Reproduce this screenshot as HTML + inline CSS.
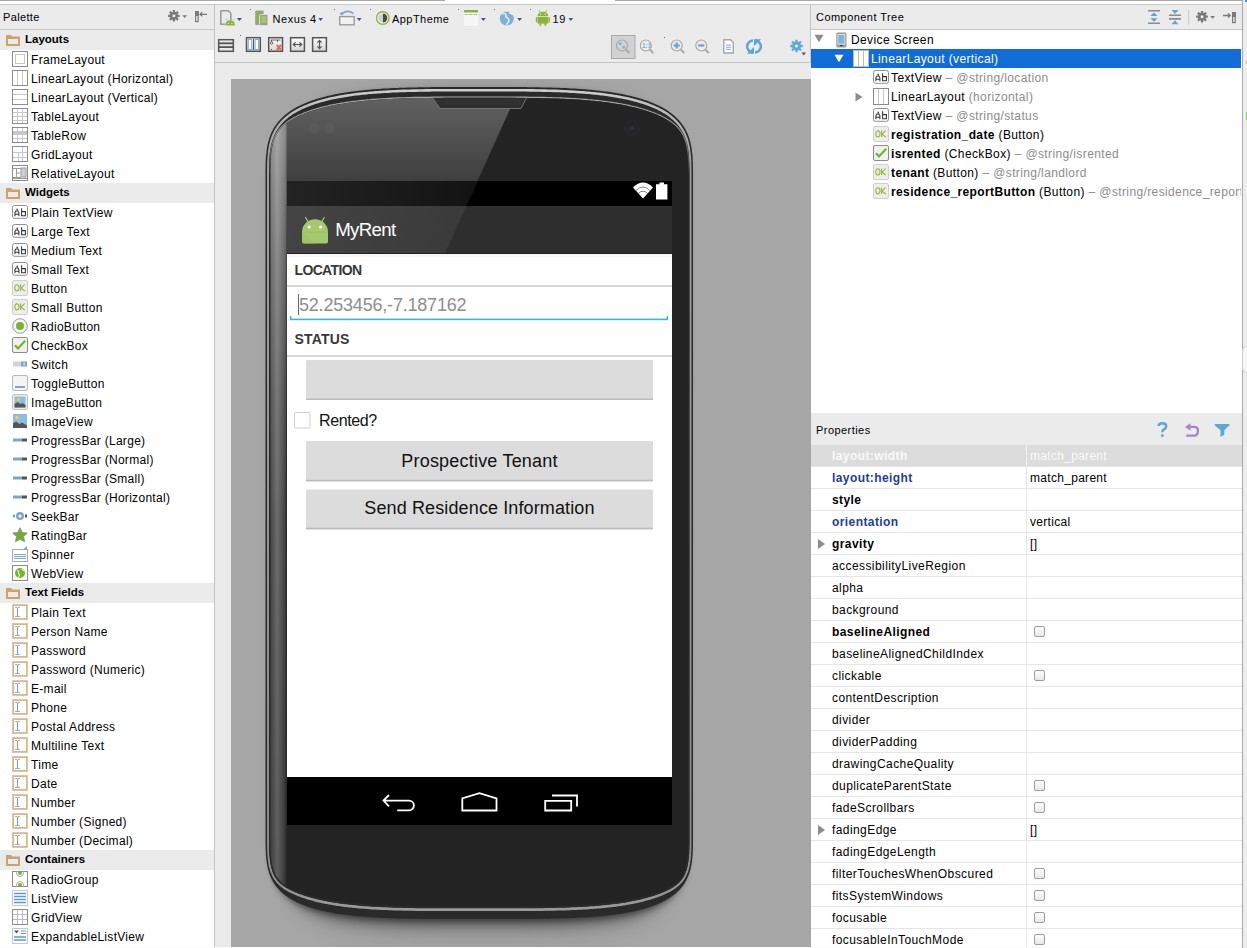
<!DOCTYPE html>
<html><head><meta charset="utf-8"><style>
*{margin:0;padding:0;box-sizing:border-box}
html,body{width:1247px;height:948px;overflow:hidden;background:#ebebeb;font-family:"Liberation Sans",sans-serif;font-size:12px;color:#000}
.abs{position:absolute}
#topline{position:absolute;left:0;top:0;width:1242px;height:1px;background:#a9a9a9}
#topgap{position:absolute;left:445px;top:0;width:170px;height:1px;background:#fff}
#topwhite{position:absolute;left:0;top:1px;width:1242px;height:3px;background:#fff}
#topline2{position:absolute;left:0;top:4px;width:1242px;height:1px;background:#c8c8c8}
/* palette */
#pal{position:absolute;left:0;top:5px;width:214px;height:943px;background:#ebebeb}
#palhead{position:absolute;left:0;top:5px;width:214px;height:25px;border-bottom:1px solid #c8c8c8}
#palhead span{position:absolute;left:3px;top:6px;font-size:11px;letter-spacing:0.35px}
#pallist{position:absolute;left:0;top:30px;width:214px;height:918px;background:#fff}
.pg{position:absolute;left:0;width:214px;height:20px;background:#ebebeb}
.pg span{position:absolute;left:25px;top:3px;font-weight:bold;font-size:11.5px;letter-spacing:0px}
.pg .fold{position:absolute;left:6px;top:4px}
.pi{position:absolute;left:0;width:214px;height:19px}
.pi .ic{position:absolute;left:12px;top:1px}
.pi span{position:absolute;left:31px;top:3px;font-size:12px;letter-spacing:0.3px}
#div1{position:absolute;left:214px;top:5px;width:1px;height:943px;background:#c4c4c4}
/* toolbar */
#tb{position:absolute;left:215px;top:5px;width:595px;height:58px;border-bottom:1px solid #c6c6c6}
#canvas{position:absolute;left:231px;top:79px;width:580px;height:868px;background:#a6a6a6;overflow:hidden}
#div2{position:absolute;left:810px;top:5px;width:1px;height:58px;background:#c4c4c4}
/* right */
#ct{position:absolute;left:811px;top:5px;width:431px;height:408px;background:#fff}
#cthead{position:absolute;left:811px;top:5px;width:431px;height:25px;background:#ebebeb;border-bottom:1px solid #c8c8c8}
#cthead span{position:absolute;left:5px;top:6px;font-size:11px;letter-spacing:0.45px}
.tr{position:absolute;left:811px;width:430px;height:19px;white-space:nowrap;overflow:hidden}
.tr span{position:absolute;top:3px;letter-spacing:0.38px}
.tr .g{color:#8c8c8c}
#prophead{position:absolute;left:811px;top:413px;width:431px;height:32px;background:#ebebeb}
#prophead span{position:absolute;left:5px;top:11px;font-size:11px;letter-spacing:0.45px}
#props{position:absolute;left:811px;top:445px;width:431px;height:503px;background:#fff}
.pr{position:absolute;left:811px;width:431px;height:22px;border-bottom:1px solid #e6e6e6}
.pr .k{position:absolute;left:21px;top:4px;letter-spacing:0.42px}
.pr .v{position:absolute;left:219px;top:4px;letter-spacing:0.3px}
.pr .sep{position:absolute;left:215px;top:0;width:1px;height:22px;background:#e6e6e6}
.pr .cb{position:absolute;left:223px;top:5px;width:11px;height:11px;border:1px solid #9d9d9d;border-radius:2px;background:linear-gradient(#fdfdfd,#e8e8e8)}
.pr .exp{position:absolute;left:7px;top:6px;width:0;height:0;border-left:7px solid #8c8c8c;border-top:5px solid transparent;border-bottom:5px solid transparent}
.b{font-weight:bold}
.blue{color:#1d3d9e}
#rborder{position:absolute;left:1242px;top:0;width:1px;height:948px;background:#a8a8a8}
#rside{position:absolute;left:1243px;top:0;width:4px;height:948px;background:#ededed}

</style></head><body>
<div id="topline"></div><div id="topgap"></div><div id="topwhite"></div><div id="topline2"></div>
<div id="pal"></div>
<div id="palhead"><span>Palette</span></div>
<div id="pallist"></div>
<div class="pg" style="top:30px"><svg class="fold" width="14" height="12" viewBox="0 0 14 12"><path d="M0 1h5l1.5 1.5H14V12H0z" fill="#c9a46e"/><rect x="2" y="5" width="10" height="5" fill="#ebebeb"/></svg><span>Layouts</span></div>
<div class="pi" style="top:50px"><svg class="ic" width="16" height="16" viewBox="0 0 16 16"><rect x="0.5" y="0.5" width="15" height="15" fill="#fff" stroke="#8c8c8c"/><rect x="3.5" y="3.5" width="9" height="9" fill="none" stroke="#c8c8c8"/></svg><span>FrameLayout</span></div>
<div class="pi" style="top:69px"><svg class="ic" width="16" height="16" viewBox="0 0 16 16"><rect x="0.5" y="0.5" width="15" height="15" fill="#fff" stroke="#8c8c8c"/><path d="M5.5 1v14M10.5 1v14" stroke="#c8c8c8"/></svg><span>LinearLayout (Horizontal)</span></div>
<div class="pi" style="top:88px"><svg class="ic" width="16" height="16" viewBox="0 0 16 16"><rect x="0.5" y="0.5" width="15" height="15" fill="#fff" stroke="#8c8c8c"/><path d="M1 5.5h14M1 10.5h14" stroke="#c8c8c8"/></svg><span>LinearLayout (Vertical)</span></div>
<div class="pi" style="top:107px"><svg class="ic" width="16" height="16" viewBox="0 0 16 16"><rect x="0.5" y="0.5" width="15" height="15" fill="#fff" stroke="#8c8c8c"/><path d="M1 4.5h14M1 8.5h14M1 12.5h14M5.5 1v14M10.5 1v14" stroke="#c8c8c8"/></svg><span>TableLayout</span></div>
<div class="pi" style="top:126px"><svg class="ic" width="16" height="16" viewBox="0 0 16 16"><rect x="0.5" y="0.5" width="15" height="15" fill="#fff" stroke="#8c8c8c"/><rect x="1" y="5" width="14" height="3" fill="#c8c8c8"/><path d="M1 4.5h14M1 11.5h14M5.5 1v14M10.5 1v14" stroke="#c8c8c8"/></svg><span>TableRow</span></div>
<div class="pi" style="top:145px"><svg class="ic" width="16" height="16" viewBox="0 0 16 16"><rect x="0.5" y="0.5" width="15" height="15" fill="#fff" stroke="#8c8c8c"/><path d="M1 6.5h14M1 11.5h14M6.5 6v9M10.5 1v14" stroke="#c8c8c8"/></svg><span>GridLayout</span></div>
<div class="pi" style="top:164px"><svg class="ic" width="16" height="16" viewBox="0 0 16 16"><rect x="0.5" y="0.5" width="15" height="15" fill="#fff" stroke="#8c8c8c"/><rect x="9" y="3" width="5" height="9" fill="#d0d0d0" stroke="#9a9a9a" stroke-width="1"/><path d="M1 12.5h8M1 3.5h8M4.5 3.5v9M4.5 8h4" stroke="#9a9a9a"/><path d="M1 13.5h14" stroke="#9a9a9a"/></svg><span>RelativeLayout</span></div>
<div class="pg" style="top:183px"><svg class="fold" width="14" height="12" viewBox="0 0 14 12"><path d="M0 1h5l1.5 1.5H14V12H0z" fill="#c9a46e"/><rect x="2" y="5" width="10" height="5" fill="#ebebeb"/></svg><span>Widgets</span></div>
<div class="pi" style="top:203px"><svg class="ic" width="16" height="16" viewBox="0 0 16 16"><rect x="0.5" y="1.5" width="15" height="12.8" rx="2" fill="#fff" stroke="#8f8f8f"/><path d="M2.9,12.2 V8.6 L3.9,7 H5.9 L6.9,8.6 V12.2 M2.9,10.2 H6.9 M4.4,5.2 H5.4 V6.2" fill="none" stroke="#333" stroke-width="1.05"/><path d="M9.6,4.3 V11.7 H13.4 V7.6 H9.6" fill="none" stroke="#333" stroke-width="1.05"/></svg><span>Plain TextView</span></div>
<div class="pi" style="top:222px"><svg class="ic" width="16" height="16" viewBox="0 0 16 16"><rect x="0.5" y="1.5" width="15" height="12.8" rx="2" fill="#fff" stroke="#8f8f8f"/><path d="M2.9,12.2 V8.6 L3.9,7 H5.9 L6.9,8.6 V12.2 M2.9,10.2 H6.9 M4.4,5.2 H5.4 V6.2" fill="none" stroke="#333" stroke-width="1.05"/><path d="M9.6,4.3 V11.7 H13.4 V7.6 H9.6" fill="none" stroke="#333" stroke-width="1.05"/></svg><span>Large Text</span></div>
<div class="pi" style="top:241px"><svg class="ic" width="16" height="16" viewBox="0 0 16 16"><rect x="0.5" y="1.5" width="15" height="12.8" rx="2" fill="#fff" stroke="#8f8f8f"/><path d="M2.9,12.2 V8.6 L3.9,7 H5.9 L6.9,8.6 V12.2 M2.9,10.2 H6.9 M4.4,5.2 H5.4 V6.2" fill="none" stroke="#333" stroke-width="1.05"/><path d="M9.6,4.3 V11.7 H13.4 V7.6 H9.6" fill="none" stroke="#333" stroke-width="1.05"/></svg><span>Medium Text</span></div>
<div class="pi" style="top:260px"><svg class="ic" width="16" height="16" viewBox="0 0 16 16"><rect x="0.5" y="1.5" width="15" height="12.8" rx="2" fill="#fff" stroke="#8f8f8f"/><path d="M2.9,12.2 V8.6 L3.9,7 H5.9 L6.9,8.6 V12.2 M2.9,10.2 H6.9 M4.4,5.2 H5.4 V6.2" fill="none" stroke="#333" stroke-width="1.05"/><path d="M9.6,4.3 V11.7 H13.4 V7.6 H9.6" fill="none" stroke="#333" stroke-width="1.05"/></svg><span>Small Text</span></div>
<div class="pi" style="top:279px"><svg class="ic" width="16" height="16" viewBox="0 0 16 16"><rect x="0.5" y="0.5" width="15" height="15" rx="1.5" fill="#ededed" stroke="#cfcfcf"/><ellipse cx="4.9" cy="7.8" rx="2.1" ry="3.1" fill="none" stroke="#94b83c" stroke-width="1.1"/><path d="M8.6,4.6 V11 M12.6,4.6 L9,8.2 L12.8,11" fill="none" stroke="#94b83c" stroke-width="1.1"/></svg><span>Button</span></div>
<div class="pi" style="top:298px"><svg class="ic" width="16" height="16" viewBox="0 0 16 16"><rect x="0.5" y="0.5" width="15" height="15" rx="1.5" fill="#ededed" stroke="#cfcfcf"/><ellipse cx="4.9" cy="7.8" rx="2.1" ry="3.1" fill="none" stroke="#94b83c" stroke-width="1.1"/><path d="M8.6,4.6 V11 M12.6,4.6 L9,8.2 L12.8,11" fill="none" stroke="#94b83c" stroke-width="1.1"/></svg><span>Small Button</span></div>
<div class="pi" style="top:317px"><svg class="ic" width="16" height="16" viewBox="0 0 16 16"><circle cx="8" cy="8" r="7.3" fill="#f4f4f4" stroke="#9a9a9a"/><circle cx="8" cy="8" r="4" fill="#77b52a"/></svg><span>RadioButton</span></div>
<div class="pi" style="top:336px"><svg class="ic" width="16" height="16" viewBox="0 0 16 16"><rect x="0.5" y="0.5" width="15" height="15" rx="1.5" fill="#f0f0f0" stroke="#8c8c8c"/><path d="M3 8.2l3 3.2L13.2 3.8" fill="none" stroke="#6fb52c" stroke-width="2.2"/></svg><span>CheckBox</span></div>
<div class="pi" style="top:355px"><svg class="ic" width="16" height="16" viewBox="0 0 16 16"><rect x="1" y="5.5" width="8" height="5" fill="#d4d4d4"/><rect x="9" y="5.5" width="6" height="5" fill="#7ba6c8"/><rect x="11.5" y="6.7" width="1.2" height="2.6" fill="#fff"/></svg><span>Switch</span></div>
<div class="pi" style="top:374px"><svg class="ic" width="16" height="16" viewBox="0 0 16 16"><rect x="0.5" y="0.5" width="15" height="15" rx="1.5" fill="#f4f4f4" stroke="#b8b8b8"/><rect x="3" y="11" width="10" height="2" fill="#7ba6c8"/></svg><span>ToggleButton</span></div>
<div class="pi" style="top:393px"><svg class="ic" width="16" height="16" viewBox="0 0 16 16"><rect x="0.5" y="0.5" width="15" height="15" rx="1.5" fill="#ececec" stroke="#c0c0c0"/><rect x="2.5" y="2.5" width="11" height="11" fill="#8fbde0"/><circle cx="6.5" cy="5.5" r="1.5" fill="#f3d23a"/><path d="M2.5 13.5V10l3-2 3 2 2-1 3 2v2.5z" fill="#555"/></svg><span>ImageButton</span></div>
<div class="pi" style="top:412px"><svg class="ic" width="16" height="16" viewBox="0 0 16 16"><rect x="1" y="1" width="14" height="14" fill="#8fbde0"/><circle cx="5" cy="4.5" r="1.8" fill="#f3d23a"/><path d="M1 15V10.5l3-2 3.5 2.5 2.5-1.5 5 3V15z" fill="#555"/></svg><span>ImageView</span></div>
<div class="pi" style="top:431px"><svg class="ic" width="16" height="16" viewBox="0 0 16 16"><rect x="1" y="6.5" width="9" height="3" fill="#7ba6c8"/><rect x="10" y="6.5" width="5" height="3" fill="#555"/></svg><span>ProgressBar (Large)</span></div>
<div class="pi" style="top:450px"><svg class="ic" width="16" height="16" viewBox="0 0 16 16"><rect x="1" y="6.5" width="9" height="3" fill="#7ba6c8"/><rect x="10" y="6.5" width="5" height="3" fill="#555"/></svg><span>ProgressBar (Normal)</span></div>
<div class="pi" style="top:469px"><svg class="ic" width="16" height="16" viewBox="0 0 16 16"><rect x="1" y="6.5" width="9" height="3" fill="#7ba6c8"/><rect x="10" y="6.5" width="5" height="3" fill="#555"/></svg><span>ProgressBar (Small)</span></div>
<div class="pi" style="top:488px"><svg class="ic" width="16" height="16" viewBox="0 0 16 16"><rect x="1" y="6.5" width="9" height="3" fill="#7ba6c8"/><rect x="10" y="6.5" width="5" height="3" fill="#555"/></svg><span>ProgressBar (Horizontal)</span></div>
<div class="pi" style="top:507px"><svg class="ic" width="16" height="16" viewBox="0 0 16 16"><rect x="1" y="6.5" width="2" height="3" fill="#7ba6c8"/><circle cx="8" cy="8" r="4" fill="#7ba6c8"/><circle cx="8" cy="8" r="1.5" fill="#fff"/><rect x="13" y="6.5" width="2" height="3" fill="#555"/></svg><span>SeekBar</span></div>
<div class="pi" style="top:526px"><svg class="ic" width="16" height="16" viewBox="0 0 16 16"><path d="M8 0.8l2.2 4.7 5.1.6-3.8 3.5 1 5.1L8 12.2l-4.5 2.5 1-5.1L0.7 6.1l5.1-.6z" fill="#73ad2e" stroke="#8c8c8c" stroke-width="0.9"/></svg><span>RatingBar</span></div>
<div class="pi" style="top:545px"><svg class="ic" width="16" height="16" viewBox="0 0 16 16"><rect x="0.5" y="3.5" width="15" height="12" fill="#fff" stroke="#aaa"/><path d="M11 3.5L15 0v3.5z" fill="#7ba6c8"/><path d="M2 8.5h12M2 10.5h12M2 12.5h12" stroke="#7ba6c8"/></svg><span>Spinner</span></div>
<div class="pi" style="top:564px"><svg class="ic" width="16" height="16" viewBox="0 0 16 16"><rect x="0.5" y="0.5" width="15" height="15" fill="#fff" stroke="#8c8c8c"/><circle cx="8" cy="8" r="5" fill="#77b52a"/><path d="M5 5.5c1.5 0 2 1 1.5 2s1 1.5 1 2.5-1 1.5-1 2.5M10 4c0 1 1 1.2 2 1.5" fill="none" stroke="#e8f2dc" stroke-width="1.1"/></svg><span>WebView</span></div>
<div class="pg" style="top:583px"><svg class="fold" width="14" height="12" viewBox="0 0 14 12"><path d="M0 1h5l1.5 1.5H14V12H0z" fill="#c9a46e"/><rect x="2" y="5" width="10" height="5" fill="#ebebeb"/></svg><span>Text Fields</span></div>
<div class="pi" style="top:603px"><svg class="ic" width="16" height="16" viewBox="0 0 16 16"><rect x="0.5" y="0.5" width="15" height="15" fill="#fff" stroke="#cacaca"/><rect x="1.5" y="1.5" width="13" height="13" fill="#fff" stroke="#f0b25e"/><path d="M5.5,4.2v8.6" stroke="#6aa2cc" stroke-width="1"/><path d="M3.2,3.5 Q5.5,3.2 5.5,4.4 Q5.5,3.2 7.8,3.5 M3.2,12.5 Q5.5,12.8 5.5,11.6 Q5.5,12.8 7.8,12.5" fill="none" stroke="#6aa2cc" stroke-width="0.9"/></svg><span>Plain Text</span></div>
<div class="pi" style="top:622px"><svg class="ic" width="16" height="16" viewBox="0 0 16 16"><rect x="0.5" y="0.5" width="15" height="15" fill="#fff" stroke="#cacaca"/><rect x="1.5" y="1.5" width="13" height="13" fill="#fff" stroke="#f0b25e"/><path d="M5.5,4.2v8.6" stroke="#6aa2cc" stroke-width="1"/><path d="M3.2,3.5 Q5.5,3.2 5.5,4.4 Q5.5,3.2 7.8,3.5 M3.2,12.5 Q5.5,12.8 5.5,11.6 Q5.5,12.8 7.8,12.5" fill="none" stroke="#6aa2cc" stroke-width="0.9"/></svg><span>Person Name</span></div>
<div class="pi" style="top:641px"><svg class="ic" width="16" height="16" viewBox="0 0 16 16"><rect x="0.5" y="0.5" width="15" height="15" fill="#fff" stroke="#cacaca"/><rect x="1.5" y="1.5" width="13" height="13" fill="#fff" stroke="#f0b25e"/><path d="M5.5,4.2v8.6" stroke="#6aa2cc" stroke-width="1"/><path d="M3.2,3.5 Q5.5,3.2 5.5,4.4 Q5.5,3.2 7.8,3.5 M3.2,12.5 Q5.5,12.8 5.5,11.6 Q5.5,12.8 7.8,12.5" fill="none" stroke="#6aa2cc" stroke-width="0.9"/></svg><span>Password</span></div>
<div class="pi" style="top:660px"><svg class="ic" width="16" height="16" viewBox="0 0 16 16"><rect x="0.5" y="0.5" width="15" height="15" fill="#fff" stroke="#cacaca"/><rect x="1.5" y="1.5" width="13" height="13" fill="#fff" stroke="#f0b25e"/><path d="M5.5,4.2v8.6" stroke="#6aa2cc" stroke-width="1"/><path d="M3.2,3.5 Q5.5,3.2 5.5,4.4 Q5.5,3.2 7.8,3.5 M3.2,12.5 Q5.5,12.8 5.5,11.6 Q5.5,12.8 7.8,12.5" fill="none" stroke="#6aa2cc" stroke-width="0.9"/></svg><span>Password (Numeric)</span></div>
<div class="pi" style="top:679px"><svg class="ic" width="16" height="16" viewBox="0 0 16 16"><rect x="0.5" y="0.5" width="15" height="15" fill="#fff" stroke="#cacaca"/><rect x="1.5" y="1.5" width="13" height="13" fill="#fff" stroke="#f0b25e"/><path d="M5.5,4.2v8.6" stroke="#6aa2cc" stroke-width="1"/><path d="M3.2,3.5 Q5.5,3.2 5.5,4.4 Q5.5,3.2 7.8,3.5 M3.2,12.5 Q5.5,12.8 5.5,11.6 Q5.5,12.8 7.8,12.5" fill="none" stroke="#6aa2cc" stroke-width="0.9"/></svg><span>E-mail</span></div>
<div class="pi" style="top:698px"><svg class="ic" width="16" height="16" viewBox="0 0 16 16"><rect x="0.5" y="0.5" width="15" height="15" fill="#fff" stroke="#cacaca"/><rect x="1.5" y="1.5" width="13" height="13" fill="#fff" stroke="#f0b25e"/><path d="M5.5,4.2v8.6" stroke="#6aa2cc" stroke-width="1"/><path d="M3.2,3.5 Q5.5,3.2 5.5,4.4 Q5.5,3.2 7.8,3.5 M3.2,12.5 Q5.5,12.8 5.5,11.6 Q5.5,12.8 7.8,12.5" fill="none" stroke="#6aa2cc" stroke-width="0.9"/></svg><span>Phone</span></div>
<div class="pi" style="top:717px"><svg class="ic" width="16" height="16" viewBox="0 0 16 16"><rect x="0.5" y="0.5" width="15" height="15" fill="#fff" stroke="#cacaca"/><rect x="1.5" y="1.5" width="13" height="13" fill="#fff" stroke="#f0b25e"/><path d="M5.5,4.2v8.6" stroke="#6aa2cc" stroke-width="1"/><path d="M3.2,3.5 Q5.5,3.2 5.5,4.4 Q5.5,3.2 7.8,3.5 M3.2,12.5 Q5.5,12.8 5.5,11.6 Q5.5,12.8 7.8,12.5" fill="none" stroke="#6aa2cc" stroke-width="0.9"/></svg><span>Postal Address</span></div>
<div class="pi" style="top:736px"><svg class="ic" width="16" height="16" viewBox="0 0 16 16"><rect x="0.5" y="0.5" width="15" height="15" fill="#fff" stroke="#cacaca"/><rect x="1.5" y="1.5" width="13" height="13" fill="#fff" stroke="#f0b25e"/><path d="M5.5,4.2v8.6" stroke="#6aa2cc" stroke-width="1"/><path d="M3.2,3.5 Q5.5,3.2 5.5,4.4 Q5.5,3.2 7.8,3.5 M3.2,12.5 Q5.5,12.8 5.5,11.6 Q5.5,12.8 7.8,12.5" fill="none" stroke="#6aa2cc" stroke-width="0.9"/></svg><span>Multiline Text</span></div>
<div class="pi" style="top:755px"><svg class="ic" width="16" height="16" viewBox="0 0 16 16"><rect x="0.5" y="0.5" width="15" height="15" fill="#fff" stroke="#cacaca"/><rect x="1.5" y="1.5" width="13" height="13" fill="#fff" stroke="#f0b25e"/><path d="M5.5,4.2v8.6" stroke="#6aa2cc" stroke-width="1"/><path d="M3.2,3.5 Q5.5,3.2 5.5,4.4 Q5.5,3.2 7.8,3.5 M3.2,12.5 Q5.5,12.8 5.5,11.6 Q5.5,12.8 7.8,12.5" fill="none" stroke="#6aa2cc" stroke-width="0.9"/></svg><span>Time</span></div>
<div class="pi" style="top:774px"><svg class="ic" width="16" height="16" viewBox="0 0 16 16"><rect x="0.5" y="0.5" width="15" height="15" fill="#fff" stroke="#cacaca"/><rect x="1.5" y="1.5" width="13" height="13" fill="#fff" stroke="#f0b25e"/><path d="M5.5,4.2v8.6" stroke="#6aa2cc" stroke-width="1"/><path d="M3.2,3.5 Q5.5,3.2 5.5,4.4 Q5.5,3.2 7.8,3.5 M3.2,12.5 Q5.5,12.8 5.5,11.6 Q5.5,12.8 7.8,12.5" fill="none" stroke="#6aa2cc" stroke-width="0.9"/></svg><span>Date</span></div>
<div class="pi" style="top:793px"><svg class="ic" width="16" height="16" viewBox="0 0 16 16"><rect x="0.5" y="0.5" width="15" height="15" fill="#fff" stroke="#cacaca"/><rect x="1.5" y="1.5" width="13" height="13" fill="#fff" stroke="#f0b25e"/><path d="M5.5,4.2v8.6" stroke="#6aa2cc" stroke-width="1"/><path d="M3.2,3.5 Q5.5,3.2 5.5,4.4 Q5.5,3.2 7.8,3.5 M3.2,12.5 Q5.5,12.8 5.5,11.6 Q5.5,12.8 7.8,12.5" fill="none" stroke="#6aa2cc" stroke-width="0.9"/></svg><span>Number</span></div>
<div class="pi" style="top:812px"><svg class="ic" width="16" height="16" viewBox="0 0 16 16"><rect x="0.5" y="0.5" width="15" height="15" fill="#fff" stroke="#cacaca"/><rect x="1.5" y="1.5" width="13" height="13" fill="#fff" stroke="#f0b25e"/><path d="M5.5,4.2v8.6" stroke="#6aa2cc" stroke-width="1"/><path d="M3.2,3.5 Q5.5,3.2 5.5,4.4 Q5.5,3.2 7.8,3.5 M3.2,12.5 Q5.5,12.8 5.5,11.6 Q5.5,12.8 7.8,12.5" fill="none" stroke="#6aa2cc" stroke-width="0.9"/></svg><span>Number (Signed)</span></div>
<div class="pi" style="top:831px"><svg class="ic" width="16" height="16" viewBox="0 0 16 16"><rect x="0.5" y="0.5" width="15" height="15" fill="#fff" stroke="#cacaca"/><rect x="1.5" y="1.5" width="13" height="13" fill="#fff" stroke="#f0b25e"/><path d="M5.5,4.2v8.6" stroke="#6aa2cc" stroke-width="1"/><path d="M3.2,3.5 Q5.5,3.2 5.5,4.4 Q5.5,3.2 7.8,3.5 M3.2,12.5 Q5.5,12.8 5.5,11.6 Q5.5,12.8 7.8,12.5" fill="none" stroke="#6aa2cc" stroke-width="0.9"/></svg><span>Number (Decimal)</span></div>
<div class="pg" style="top:850px"><svg class="fold" width="14" height="12" viewBox="0 0 14 12"><path d="M0 1h5l1.5 1.5H14V12H0z" fill="#c9a46e"/><rect x="2" y="5" width="10" height="5" fill="#ebebeb"/></svg><span>Containers</span></div>
<div class="pi" style="top:870px"><svg class="ic" width="16" height="16" viewBox="0 0 16 16"><rect x="0.5" y="0.5" width="15" height="15" fill="#fff" stroke="#8c8c8c"/><circle cx="8" cy="2" r="3.5" fill="none" stroke="#aaa"/><circle cx="8" cy="2" r="2" fill="#77b52a"/><circle cx="8" cy="14" r="3.5" fill="none" stroke="#aaa"/><circle cx="8" cy="14" r="2" fill="#77b52a"/></svg><span>RadioGroup</span></div>
<div class="pi" style="top:889px"><svg class="ic" width="16" height="16" viewBox="0 0 16 16"><rect x="0.5" y="0.5" width="15" height="15" fill="#fff" stroke="#c8c8c8"/><path d="M2 3.5h12M2 6.5h12M2 9.5h12M2 12.5h12" stroke="#5b9bd0" stroke-width="1.6"/></svg><span>ListView</span></div>
<div class="pi" style="top:908px"><svg class="ic" width="16" height="16" viewBox="0 0 16 16"><rect x="0.5" y="0.5" width="15" height="15" fill="#fff" stroke="#8c8c8c"/><path d="M1 5.5h14M1 10.5h14M5.5 1v14M10.5 1v14" stroke="#bbb"/></svg><span>GridView</span></div>
<div class="pi" style="top:927px"><svg class="ic" width="16" height="16" viewBox="0 0 16 16"><rect x="0.5" y="0.5" width="15" height="15" fill="#fff" stroke="#c8c8c8"/><path d="M2 2.5h5l-2.5 3z" fill="#555"/><path d="M9 3h5M9 5.5h5" stroke="#5b9bd0"/><path d="M2 9h12M2 12h12" stroke="#5b9bd0" stroke-width="1.6"/></svg><span>ExpandableListView</span></div>
<div id="div1"></div>
<div id="tb"></div>
<svg style="position:absolute;left:215px;top:5px" width="595" height="57" viewBox="215 5 595 57">
<defs>
 <linearGradient id="tgrad" x1="0" y1="0" x2="0" y2="1"><stop offset="0" stop-color="#fbfbfb"/><stop offset="1" stop-color="#d6d6d6"/></linearGradient>
</defs>
<g fill="#3d5a80">
 <path d="M236.8,18 L242,18 L239.4,21Z"/><path d="M318.3,18 L323,18 L320.6,21Z"/><path d="M356.8,18 L361.6,18 L359.2,21Z"/>
 <path d="M481,18 L485.8,18 L483.4,21Z"/><path d="M517.3,18 L522,18 L519.6,21Z"/><path d="M568.5,18 L573.2,18 L570.8,21Z"/>
</g>
<g fill="#6d6d6d"><rect x="250" y="9" width="1" height="1"/><rect x="334" y="9" width="1" height="1"/><rect x="370" y="9" width="1" height="1"/><rect x="458" y="9" width="1" height="1"/><rect x="494" y="9" width="1" height="1"/><rect x="530" y="9" width="1" height="1"/><rect x="240" y="35" width="1" height="1"/><rect x="664" y="37" width="1" height="1"/></g>
<!-- file w/ android -->
<path d="M220.8,10.8 L228.3,10.8 L230.8,13.3 L230.8,20 M225,24.2 L220.8,24.2 L220.8,10.8" fill="none" stroke="#9a9a9a" stroke-width="1.6"/>
<path d="M225.3,25.5 Q225.3,20.2 230.1,20.2 Q234.9,20.2 234.9,25.5Z" fill="#8fb33a"/>
<path d="M226.5,19.8 L225.8,18.8 M233.7,19.8 L234.4,18.8" stroke="#8fb33a" stroke-width="0.9"/>
<circle cx="228.3" cy="23.3" r="0.6" fill="#fff"/><circle cx="231.9" cy="23.3" r="0.6" fill="#fff"/>
<!-- devices -->
<rect x="255.2" y="10.5" width="8.5" height="14.5" rx="1" fill="#9c9c9c"/><rect x="256.6" y="12" width="5.8" height="10" fill="#8fb33a"/>
<rect x="259.5" y="14.5" width="8.4" height="11" rx="1" fill="#9c9c9c" stroke="#ebebeb" stroke-width="0.8"/><rect x="261" y="16.2" width="5.4" height="6.6" fill="#a8c45a"/>
<text x="272.5" y="22.7" font-family="Liberation Sans" font-size="11" fill="#000" letter-spacing="0.55">Nexus 4</text>
<!-- rotate -->
<rect x="339.7" y="16.6" width="14.5" height="8.2" fill="#f2f2f2" stroke="#9c9c9c" stroke-width="1.4"/>
<path d="M341,15 Q347,8.5 353.5,13.6" fill="none" stroke="#7aa7cc" stroke-width="1.5"/><path d="M339.5,13.2 L342.8,11.5 L342.6,15.2Z" fill="#7aa7cc"/>
<!-- theme -->
<circle cx="382.8" cy="18" r="6.2" fill="#fff" stroke="#8fb33a" stroke-width="1.4"/>
<path d="M382.8,13.4 A4.6,4.6 0 0 1 382.8,22.6Z" fill="#4a4a4a"/><path d="M382.8,13.4 A4.6,4.6 0 0 0 382.8,22.6Z" fill="#d0d0d0"/>
<text x="392" y="22.6" font-family="Liberation Sans" font-size="11" fill="#000" letter-spacing="0.45">AppTheme</text>
<!-- activity -->
<rect x="464" y="10" width="14" height="15.8" fill="#f7f7f7"/><rect x="464" y="10" width="14" height="2.5" fill="#8fb33a"/>
<path d="M464.5,14.5 h3 m1,0 h4 m1,0 h3.5" stroke="#b0b0b0" stroke-width="1"/>
<!-- globe -->
<circle cx="506.8" cy="18.5" r="7" fill="#7fb0d8"/>
<path d="M502,14 Q505,12.5 506,14.5 Q505,17 507.5,18 Q510,19.5 508,22.5 L506.5,25 M509,12.5 Q511.5,13 512.5,15" fill="none" stroke="#eef5fb" stroke-width="1.4"/>
<!-- android 19 -->
<path d="M537.6,16.3 Q537.6,11.7 542.9,11.7 Q548.2,11.7 548.2,16.3Z" fill="#8fb33a"/>
<rect x="537.6" y="17" width="10.6" height="6.6" fill="#8fb33a"/>
<rect x="535.8" y="17" width="1.5" height="5.5" rx="0.7" fill="#8fb33a"/><rect x="548.5" y="17" width="1.5" height="5.5" rx="0.7" fill="#8fb33a"/>
<rect x="539.5" y="23" width="1.8" height="2.8" fill="#8fb33a"/><rect x="544.5" y="23" width="1.8" height="2.8" fill="#8fb33a"/>
<path d="M539.2,10.2 L540.2,12 M546.6,10.2 L545.6,12" stroke="#8fb33a" stroke-width="0.9"/>
<circle cx="540.6" cy="14.2" r="0.6" fill="#fff"/><circle cx="545.2" cy="14.2" r="0.6" fill="#fff"/>
<text x="552.5" y="22.6" font-family="Liberation Sans" font-size="11" fill="#000" letter-spacing="0.6">19</text>
<!-- row 2 -->
<g stroke="#555" stroke-width="1.5" fill="url(#tgrad)">
 <rect x="218.7" y="39.7" width="14.6" height="3.6"/><rect x="218.7" y="43.5" width="14.6" height="3.6"/><rect x="218.7" y="47.3" width="14.6" height="4"/>
 <rect x="246.5" y="37.7" width="13.8" height="13.6"/>
 <rect x="268.7" y="37.7" width="13.8" height="13.6"/>
 <rect x="290.6" y="37.7" width="13.8" height="13.6"/>
 <rect x="312.6" y="37.7" width="13.8" height="13.6"/>
</g>
<rect x="248.3" y="39.5" width="3.4" height="10" fill="#fff" stroke="#7fb0d8" stroke-width="1"/><rect x="255.1" y="39.5" width="3.4" height="10" fill="#fff" stroke="#7fb0d8" stroke-width="1"/><rect x="253" y="39" width="1" height="11" fill="#555"/>
<path d="M270.5,40 h10 M271.5,40 v2 M277.5,40 v2" stroke="#555" stroke-width="0.9"/><circle cx="271.6" cy="43" r="1.3" fill="none" stroke="#555" stroke-width="0.8"/><path d="M276.8,45 L281,50.2 M281,45 L276.8,50.2" stroke="#e0695a" stroke-width="2"/><rect x="271" y="49" width="1" height="1" fill="#555"/>
<path d="M293.5,44.5 h8 M295.6,42.4 L293.3,44.5 L295.6,46.6 M299.4,42.4 L301.7,44.5 L299.4,46.6" fill="none" stroke="#555" stroke-width="1.2"/>
<path d="M319.5,40.5 v8 M317.4,42.6 L319.5,40.3 L321.6,42.6 M317.4,46.4 L319.5,48.7 L321.6,46.4" fill="none" stroke="#555" stroke-width="1.2"/>
<!-- zoom btns -->
<rect x="611.5" y="35.5" width="23.5" height="23" fill="#d2d2d2" stroke="#a9a9a9"/>
<g fill="none" stroke="#a6a6a6" stroke-width="1.1">
 <circle cx="622" cy="45.5" r="5.5"/><circle cx="645.8" cy="45.5" r="5.5"/><circle cx="676.7" cy="45.5" r="5.5"/><circle cx="701.3" cy="45.5" r="5.5"/>
</g>
<g stroke="#a6a6a6" stroke-width="1.8">
 <path d="M625.8,49.3 L629.5,53"/><path d="M649.6,49.3 L653.3,53"/><path d="M680.5,49.3 L684.2,53"/><path d="M705.1,49.3 L708.8,53"/>
</g>
<path d="M619,42.5 h2.5 v2.5 h-2.5z M622.5,46 h2.5 v2.5 h-2.5z" fill="#7fb0d8"/>
<text x="642" y="48.3" font-family="Liberation Sans" font-weight="bold" font-size="6.5" fill="#7fb0d8">1:1</text>
<path d="M673.6,45.5 h6.2 M676.7,42.4 v6.2" stroke="#6aa2d0" stroke-width="2.2"/>
<path d="M698.2,45.5 h6.2" stroke="#6aa2d0" stroke-width="2.2"/>
<path d="M723.8,39.8 L730.5,39.8 L733.3,42.6 L733.3,53 L723.8,53Z" fill="#fff" stroke="#a6a6a6" stroke-width="1.4"/>
<path d="M726,45 h5 M726,47.2 h5 M726,49.4 h5" stroke="#6aa2d0" stroke-width="0.9"/>
<path d="M753,40.6 A5.9,5.9 0 0 0 753,52.4" fill="none" stroke="#5aa6d6" stroke-width="2.5"/>
<path d="M755,52.4 A5.9,5.9 0 0 0 755,40.6" fill="none" stroke="#5aa6d6" stroke-width="2.5"/>
<path d="M754,39.3 L761.2,39.3 L754,46Z M754,53.8 L746.8,53.8 L754,47Z" fill="#5aa6d6"/>
<g transform="translate(796.5,46)"><circle r="4.4" fill="#5aaad5"/><g stroke="#5aaad5" stroke-width="2.3"><path d="M0,-6.3 V6.3 M-6.3,0 H6.3 M-4.5,-4.5 L4.5,4.5 M4.5,-4.5 L-4.5,4.5"/></g><circle r="1.6" fill="#ebebeb"/></g>
<path d="M801.5,52.5 L806,52.5 L803.75,55.5Z" fill="#555"/>
</svg>

<div id="canvas"><svg id="phone" width="580" height="868" viewBox="231 79 580 868" style="position:absolute;left:0;top:0">
<defs>
 <filter id="fblur" x="-20%" y="-20%" width="140%" height="140%"><feGaussianBlur stdDeviation="6"/></filter>
 <filter id="fblur3" x="-20%" y="-20%" width="140%" height="140%"><feGaussianBlur stdDeviation="14"/></filter>
 <filter id="fblur2" x="-20%" y="-20%" width="140%" height="140%"><feGaussianBlur stdDeviation="2.5"/></filter>
 <clipPath id="bodyclip"><path d="M479.3,97.8 L464.0,97.8 L456.6,97.8 L450.7,97.8 L445.6,97.8 L441.0,97.9 L436.8,97.9 L432.9,97.9 L429.3,98.0 L425.8,98.0 L422.5,98.1 L419.4,98.1 L416.4,98.2 L413.4,98.2 L410.6,98.3 L407.9,98.4 L405.3,98.5 L402.7,98.5 L400.2,98.6 L397.8,98.7 L395.4,98.8 L393.1,98.9 L390.8,99.0 L388.6,99.1 L386.5,99.2 L384.3,99.4 L382.3,99.5 L380.2,99.6 L378.2,99.8 L376.2,99.9 L374.3,100.0 L372.4,100.2 L370.6,100.4 L368.7,100.5 L366.9,100.7 L365.1,100.8 L363.4,101.0 L361.7,101.2 L360.0,101.4 L358.3,101.6 L356.7,101.8 L355.1,101.9 L353.5,102.1 L351.9,102.3 L350.4,102.6 L348.9,102.8 L347.4,103.0 L345.9,103.2 L344.4,103.4 L343.0,103.7 L341.6,103.9 L340.2,104.1 L338.8,104.4 L337.4,104.6 L336.1,104.9 L334.8,105.1 L333.5,105.4 L332.2,105.6 L330.9,105.9 L329.7,106.2 L328.5,106.4 L327.3,106.7 L326.1,107.0 L324.9,107.3 L323.7,107.6 L322.6,107.8 L321.5,108.1 L320.3,108.4 L319.2,108.7 L318.2,109.0 L317.1,109.3 L316.0,109.6 L315.0,110.0 L314.0,110.3 L313.0,110.6 L312.0,110.9 L311.0,111.2 L310.0,111.6 L309.1,111.9 L308.1,112.2 L307.2,112.6 L306.3,112.9 L305.4,113.2 L304.5,113.6 L303.7,113.9 L302.8,114.3 L301.9,114.6 L301.1,115.0 L300.3,115.4 L299.5,115.7 L298.7,116.1 L297.9,116.5 L297.1,116.8 L296.3,117.2 L295.6,117.6 L294.8,118.0 L294.1,118.4 L293.4,118.8 L292.7,119.2 L292.0,119.6 L291.3,120.0 L290.6,120.4 L289.9,120.9 L289.3,121.3 L288.6,121.7 L288.0,122.2 L287.3,122.6 L286.7,123.1 L286.1,123.6 L285.5,124.0 L284.9,124.5 L284.3,125.0 L283.8,125.5 L283.2,126.0 L282.6,126.6 L282.1,127.1 L281.6,127.7 L281.1,128.2 L280.6,128.8 L280.1,129.4 L279.6,130.0 L279.1,130.6 L278.6,131.2 L278.2,131.9 L277.8,132.5 L277.3,133.2 L276.9,133.9 L276.5,134.6 L276.2,135.3 L275.8,136.0 L275.4,136.8 L275.1,137.6 L274.8,138.4 L274.5,139.2 L274.1,140.0 L273.9,140.8 L273.6,141.7 L273.3,142.6 L273.1,143.5 L272.8,144.5 L272.6,145.4 L272.4,146.4 L272.2,147.4 L272.0,148.5 L271.8,149.6 L271.6,150.7 L271.5,151.9 L271.3,153.1 L271.2,154.3 L271.1,155.7 L271.0,157.1 L270.9,158.5 L270.8,160.1 L270.7,161.7 L270.6,163.5 L270.6,165.4 L270.6,167.6 L270.5,170.2 L270.5,173.4 L270.5,180.0 L270.5,185.0 L270.5,207.1 L270.5,229.1 L270.5,251.2 L270.5,273.3 L270.5,295.3 L270.5,317.4 L270.5,339.5 L270.5,361.6 L270.5,383.6 L270.5,405.7 L270.5,427.8 L270.5,449.8 L270.5,471.9 L270.5,494.0 L270.5,516.0 L270.5,538.1 L270.5,560.2 L270.5,582.2 L270.5,604.3 L270.5,626.4 L270.5,648.4 L270.5,670.5 L270.5,692.6 L270.5,714.7 L270.5,736.7 L270.5,758.8 L270.5,780.9 L270.5,802.9 L270.5,825.0 L270.5,830.0 L270.5,837.8 L270.5,841.2 L270.5,843.9 L270.6,846.1 L270.6,848.1 L270.7,849.9 L270.8,851.6 L270.8,853.1 L270.9,854.5 L271.0,855.9 L271.1,857.2 L271.3,858.4 L271.4,859.6 L271.6,860.7 L271.7,861.8 L271.9,862.8 L272.1,863.8 L272.2,864.8 L272.4,865.8 L272.7,866.7 L272.9,867.5 L273.1,868.4 L273.4,869.2 L273.6,870.1 L273.9,870.8 L274.2,871.6 L274.5,872.3 L274.8,873.1 L275.1,873.8 L275.5,874.5 L275.8,875.1 L276.2,875.8 L276.6,876.4 L277.0,877.0 L277.4,877.6 L277.8,878.2 L278.2,878.8 L278.7,879.3 L279.1,879.8 L279.6,880.4 L280.1,880.9 L280.6,881.4 L281.1,881.8 L281.6,882.3 L282.1,882.7 L282.6,883.2 L283.2,883.6 L283.7,884.0 L284.3,884.4 L284.8,884.8 L285.4,885.2 L286.0,885.6 L286.6,885.9 L287.2,886.3 L287.8,886.6 L288.4,887.0 L289.0,887.3 L289.6,887.6 L290.3,888.0 L290.9,888.3 L291.6,888.6 L292.2,888.9 L292.9,889.2 L293.6,889.5 L294.3,889.8 L295.0,890.1 L295.7,890.4 L296.4,890.7 L297.1,891.0 L297.9,891.3 L298.6,891.5 L299.4,891.8 L300.1,892.1 L300.9,892.4 L301.7,892.7 L302.5,892.9 L303.3,893.2 L304.2,893.5 L305.0,893.7 L305.8,894.0 L306.7,894.3 L307.6,894.5 L308.5,894.8 L309.4,895.1 L310.3,895.3 L311.2,895.6 L312.2,895.8 L313.1,896.1 L314.1,896.4 L315.1,896.6 L316.1,896.9 L317.1,897.1 L318.1,897.3 L319.2,897.6 L320.3,897.8 L321.3,898.1 L322.4,898.3 L323.6,898.5 L324.7,898.8 L325.8,899.0 L327.0,899.2 L328.2,899.4 L329.4,899.7 L330.6,899.9 L331.8,900.1 L333.1,900.3 L334.4,900.5 L335.7,900.7 L337.0,900.9 L338.3,901.1 L339.7,901.3 L341.1,901.5 L342.5,901.7 L343.9,901.9 L345.3,902.1 L346.8,902.2 L348.3,902.4 L349.8,902.6 L351.4,902.8 L352.9,902.9 L354.5,903.1 L356.1,903.2 L357.8,903.4 L359.5,903.5 L361.2,903.7 L362.9,903.8 L364.7,904.0 L366.5,904.1 L368.3,904.2 L370.2,904.4 L372.1,904.5 L374.1,904.6 L376.1,904.7 L378.1,904.8 L380.2,904.9 L382.3,905.0 L384.5,905.1 L386.7,905.2 L389.0,905.3 L391.4,905.4 L393.8,905.5 L396.3,905.6 L398.8,905.6 L401.5,905.7 L404.2,905.8 L407.0,905.8 L410.0,905.9 L413.1,905.9 L416.3,906.0 L419.6,906.0 L423.2,906.1 L427.0,906.1 L431.0,906.1 L435.4,906.1 L440.3,906.2 L445.7,906.2 L452.2,906.2 L460.4,906.2 L479.3,906.2 L498.1,906.2 L506.3,906.2 L512.8,906.2 L518.2,906.2 L523.1,906.1 L527.5,906.1 L531.5,906.1 L535.3,906.1 L538.9,906.0 L542.2,906.0 L545.4,905.9 L548.5,905.9 L551.5,905.8 L554.3,905.8 L557.0,905.7 L559.7,905.6 L562.2,905.6 L564.7,905.5 L567.1,905.4 L569.5,905.3 L571.8,905.2 L574.0,905.1 L576.2,905.0 L578.3,904.9 L580.4,904.8 L582.4,904.7 L584.4,904.6 L586.4,904.5 L588.3,904.4 L590.2,904.2 L592.0,904.1 L593.8,904.0 L595.6,903.8 L597.3,903.7 L599.0,903.5 L600.7,903.4 L602.4,903.2 L604.0,903.1 L605.6,902.9 L607.1,902.8 L608.7,902.6 L610.2,902.4 L611.7,902.2 L613.2,902.1 L614.6,901.9 L616.0,901.7 L617.4,901.5 L618.8,901.3 L620.2,901.1 L621.5,900.9 L622.8,900.7 L624.1,900.5 L625.4,900.3 L626.7,900.1 L627.9,899.9 L629.1,899.7 L630.3,899.4 L631.5,899.2 L632.7,899.0 L633.8,898.8 L634.9,898.5 L636.1,898.3 L637.2,898.1 L638.2,897.8 L639.3,897.6 L640.4,897.3 L641.4,897.1 L642.4,896.9 L643.4,896.6 L644.4,896.4 L645.4,896.1 L646.3,895.8 L647.3,895.6 L648.2,895.3 L649.1,895.1 L650.0,894.8 L650.9,894.5 L651.8,894.3 L652.7,894.0 L653.5,893.7 L654.3,893.5 L655.2,893.2 L656.0,892.9 L656.8,892.7 L657.6,892.4 L658.4,892.1 L659.1,891.8 L659.9,891.5 L660.6,891.3 L661.4,891.0 L662.1,890.7 L662.8,890.4 L663.5,890.1 L664.2,889.8 L664.9,889.5 L665.6,889.2 L666.3,888.9 L666.9,888.6 L667.6,888.3 L668.2,888.0 L668.9,887.6 L669.5,887.3 L670.1,887.0 L670.7,886.6 L671.3,886.3 L671.9,885.9 L672.5,885.6 L673.1,885.2 L673.7,884.8 L674.2,884.4 L674.8,884.0 L675.3,883.6 L675.9,883.2 L676.4,882.7 L676.9,882.3 L677.4,881.8 L677.9,881.4 L678.4,880.9 L678.9,880.4 L679.4,879.8 L679.8,879.3 L680.3,878.8 L680.7,878.2 L681.1,877.6 L681.5,877.0 L681.9,876.4 L682.3,875.8 L682.7,875.1 L683.0,874.5 L683.4,873.8 L683.7,873.1 L684.0,872.3 L684.3,871.6 L684.6,870.8 L684.9,870.1 L685.1,869.2 L685.4,868.4 L685.6,867.5 L685.8,866.7 L686.1,865.8 L686.3,864.8 L686.4,863.8 L686.6,862.8 L686.8,861.8 L686.9,860.7 L687.1,859.6 L687.2,858.4 L687.4,857.2 L687.5,855.9 L687.6,854.5 L687.7,853.1 L687.7,851.6 L687.8,849.9 L687.9,848.1 L687.9,846.1 L688.0,843.9 L688.0,841.2 L688.0,837.8 L688.0,830.0 L688.0,825.0 L688.0,802.9 L688.0,780.9 L688.0,758.8 L688.0,736.7 L688.0,714.7 L688.0,692.6 L688.0,670.5 L688.0,648.4 L688.0,626.4 L688.0,604.3 L688.0,582.2 L688.0,560.2 L688.0,538.1 L688.0,516.0 L688.0,494.0 L688.0,471.9 L688.0,449.8 L688.0,427.8 L688.0,405.7 L688.0,383.6 L688.0,361.6 L688.0,339.5 L688.0,317.4 L688.0,295.3 L688.0,273.3 L688.0,251.2 L688.0,229.1 L688.0,207.1 L688.0,185.0 L688.0,180.0 L688.0,173.4 L688.0,170.2 L687.9,167.6 L687.9,165.4 L687.9,163.5 L687.8,161.7 L687.7,160.1 L687.6,158.5 L687.5,157.1 L687.4,155.7 L687.3,154.3 L687.2,153.1 L687.0,151.9 L686.9,150.7 L686.7,149.6 L686.5,148.5 L686.3,147.4 L686.1,146.4 L685.9,145.4 L685.7,144.5 L685.4,143.5 L685.2,142.6 L684.9,141.7 L684.6,140.8 L684.4,140.0 L684.0,139.2 L683.7,138.4 L683.4,137.6 L683.1,136.8 L682.7,136.0 L682.3,135.3 L682.0,134.6 L681.6,133.9 L681.2,133.2 L680.7,132.5 L680.3,131.9 L679.9,131.2 L679.4,130.6 L678.9,130.0 L678.4,129.4 L677.9,128.8 L677.4,128.2 L676.9,127.7 L676.4,127.1 L675.9,126.6 L675.3,126.0 L674.7,125.5 L674.2,125.0 L673.6,124.5 L673.0,124.0 L672.4,123.6 L671.8,123.1 L671.2,122.6 L670.5,122.2 L669.9,121.7 L669.2,121.3 L668.6,120.9 L667.9,120.4 L667.2,120.0 L666.5,119.6 L665.8,119.2 L665.1,118.8 L664.4,118.4 L663.7,118.0 L662.9,117.6 L662.2,117.2 L661.4,116.8 L660.6,116.5 L659.8,116.1 L659.0,115.7 L658.2,115.4 L657.4,115.0 L656.6,114.6 L655.7,114.3 L654.8,113.9 L654.0,113.6 L653.1,113.2 L652.2,112.9 L651.3,112.6 L650.4,112.2 L649.4,111.9 L648.5,111.6 L647.5,111.2 L646.5,110.9 L645.5,110.6 L644.5,110.3 L643.5,110.0 L642.5,109.6 L641.4,109.3 L640.3,109.0 L639.3,108.7 L638.2,108.4 L637.0,108.1 L635.9,107.8 L634.8,107.6 L633.6,107.3 L632.4,107.0 L631.2,106.7 L630.0,106.4 L628.8,106.2 L627.6,105.9 L626.3,105.6 L625.0,105.4 L623.7,105.1 L622.4,104.9 L621.1,104.6 L619.7,104.4 L618.3,104.1 L616.9,103.9 L615.5,103.7 L614.1,103.4 L612.6,103.2 L611.1,103.0 L609.6,102.8 L608.1,102.6 L606.6,102.3 L605.0,102.1 L603.4,101.9 L601.8,101.8 L600.2,101.6 L598.5,101.4 L596.8,101.2 L595.1,101.0 L593.4,100.8 L591.6,100.7 L589.8,100.5 L587.9,100.4 L586.1,100.2 L584.2,100.0 L582.3,99.9 L580.3,99.8 L578.3,99.6 L576.2,99.5 L574.2,99.4 L572.0,99.2 L569.9,99.1 L567.7,99.0 L565.4,98.9 L563.1,98.8 L560.7,98.7 L558.3,98.6 L555.8,98.5 L553.2,98.5 L550.6,98.4 L547.9,98.3 L545.1,98.2 L542.1,98.2 L539.1,98.1 L536.0,98.1 L532.7,98.0 L529.2,98.0 L525.6,97.9 L521.7,97.9 L517.5,97.9 L512.9,97.8 L507.8,97.8 L501.9,97.8 L494.5,97.8 L479.2,97.8Z"/></clipPath>
 <clipPath id="topclip"><rect x="231" y="79" width="580" height="70"/></clipPath>
 <linearGradient id="rimg" gradientUnits="userSpaceOnUse" x1="0" y1="88" x2="0" y2="919">
  <stop offset="0" stop-color="#cdcdcd"/><stop offset="0.08" stop-color="#a0a0a0"/><stop offset="0.9" stop-color="#8a8a8a"/><stop offset="1" stop-color="#9c9c9c"/>
 </linearGradient>
 <linearGradient id="glassg" gradientUnits="userSpaceOnUse" x1="0" y1="95" x2="0" y2="175">
  <stop offset="0" stop-color="#a8a8a8"/><stop offset="0.5" stop-color="#8a8a8a"/><stop offset="1" stop-color="#2a2a2a"/>
 </linearGradient>
 <linearGradient id="lbandtop" gradientUnits="userSpaceOnUse" x1="0" y1="120" x2="0" y2="520">
  <stop offset="0" stop-color="#fff" stop-opacity="0.22"/><stop offset="1" stop-color="#fff" stop-opacity="0"/>
 </linearGradient>
 <linearGradient id="sbg" gradientUnits="userSpaceOnUse" x1="287" y1="0" x2="475" y2="0"><stop offset="0" stop-color="#232323"/><stop offset="1" stop-color="#131313"/></linearGradient>
 <linearGradient id="abg" gradientUnits="userSpaceOnUse" x1="287" y1="206" x2="460" y2="254"><stop offset="0" stop-color="#444"/><stop offset="1" stop-color="#3a3a3a"/></linearGradient>
 <linearGradient id="lband" x1="0" y1="0" x2="1" y2="0">
  <stop offset="0" stop-color="#444"/><stop offset="0.45" stop-color="#727272"/><stop offset="0.8" stop-color="#505050"/><stop offset="1" stop-color="#343434"/>
 </linearGradient>
 <linearGradient id="lbandv" x1="0" y1="0" x2="0" y2="1">
  <stop offset="0" stop-color="#000" stop-opacity="0"/><stop offset="0.45" stop-color="#000" stop-opacity="0.03"/><stop offset="1" stop-color="#000" stop-opacity="0.2"/>
 </linearGradient>
 <linearGradient id="glare" gradientUnits="userSpaceOnUse" x1="0" y1="98" x2="0" y2="400">
  <stop offset="0" stop-color="#fff" stop-opacity="0.28"/><stop offset="0.27" stop-color="#fff" stop-opacity="0.13"/><stop offset="0.55" stop-color="#fff" stop-opacity="0.05"/><stop offset="1" stop-color="#fff" stop-opacity="0"/>
 </linearGradient>
</defs>
<!-- shadow -->
<path d="M479.3,87.0 L464.0,87.0 L456.5,87.0 L450.6,87.0 L445.5,87.0 L440.9,87.1 L436.7,87.1 L432.8,87.1 L429.2,87.2 L425.7,87.2 L422.4,87.3 L419.2,87.3 L416.1,87.4 L413.2,87.4 L410.4,87.5 L407.6,87.6 L404.9,87.7 L402.3,87.7 L399.8,87.8 L397.3,87.9 L394.9,88.0 L392.6,88.1 L390.3,88.3 L388.0,88.4 L385.8,88.5 L383.7,88.6 L381.6,88.8 L379.5,88.9 L377.4,89.0 L375.4,89.2 L373.5,89.3 L371.5,89.5 L369.6,89.7 L367.7,89.8 L365.9,90.0 L364.1,90.2 L362.3,90.4 L360.5,90.6 L358.8,90.8 L357.1,91.0 L355.4,91.2 L353.7,91.4 L352.1,91.6 L350.4,91.8 L348.8,92.0 L347.3,92.3 L345.7,92.5 L344.2,92.8 L342.7,93.0 L341.2,93.3 L339.7,93.5 L338.3,93.8 L336.8,94.1 L335.4,94.3 L334.0,94.6 L332.6,94.9 L331.3,95.2 L329.9,95.5 L328.6,95.8 L327.3,96.1 L326.0,96.4 L324.7,96.7 L323.5,97.1 L322.2,97.4 L321.0,97.7 L319.8,98.1 L318.6,98.4 L317.4,98.8 L316.2,99.1 L315.1,99.5 L314.0,99.9 L312.8,100.3 L311.7,100.6 L310.6,101.0 L309.6,101.4 L308.5,101.8 L307.5,102.2 L306.4,102.7 L305.4,103.1 L304.4,103.5 L303.4,103.9 L302.4,104.4 L301.5,104.8 L300.5,105.3 L299.6,105.7 L298.7,106.2 L297.8,106.6 L296.9,107.1 L296.0,107.6 L295.1,108.1 L294.3,108.6 L293.4,109.1 L292.6,109.6 L291.8,110.1 L291.0,110.6 L290.2,111.1 L289.4,111.7 L288.7,112.2 L287.9,112.8 L287.2,113.3 L286.4,113.9 L285.7,114.5 L285.0,115.0 L284.3,115.6 L283.7,116.2 L283.0,116.8 L282.4,117.4 L281.7,118.0 L281.1,118.7 L280.5,119.3 L279.9,119.9 L279.3,120.6 L278.7,121.2 L278.2,121.9 L277.6,122.6 L277.1,123.3 L276.6,124.0 L276.1,124.7 L275.6,125.4 L275.1,126.1 L274.6,126.8 L274.1,127.6 L273.7,128.3 L273.2,129.1 L272.8,129.9 L272.4,130.7 L272.0,131.5 L271.6,132.3 L271.2,133.1 L270.9,134.0 L270.5,134.8 L270.2,135.7 L269.9,136.6 L269.5,137.5 L269.2,138.4 L268.9,139.4 L268.7,140.3 L268.4,141.3 L268.1,142.3 L267.9,143.3 L267.7,144.4 L267.4,145.4 L267.2,146.5 L267.0,147.7 L266.8,148.8 L266.7,150.0 L266.5,151.3 L266.4,152.5 L266.2,153.9 L266.1,155.2 L266.0,156.7 L265.9,158.2 L265.8,159.8 L265.7,161.5 L265.6,163.3 L265.6,165.3 L265.6,167.5 L265.5,170.1 L265.5,173.4 L265.5,180.0 L265.5,185.0 L265.5,207.1 L265.5,229.1 L265.5,251.2 L265.5,273.3 L265.5,295.3 L265.5,317.4 L265.5,339.5 L265.5,361.6 L265.5,383.6 L265.5,405.7 L265.5,427.8 L265.5,449.8 L265.5,471.9 L265.5,494.0 L265.5,516.0 L265.5,538.1 L265.5,560.2 L265.5,582.2 L265.5,604.3 L265.5,626.4 L265.5,648.4 L265.5,670.5 L265.5,692.6 L265.5,714.7 L265.5,736.7 L265.5,758.8 L265.5,780.9 L265.5,802.9 L265.5,825.0 L265.5,830.0 L265.5,837.8 L265.5,841.3 L265.5,844.0 L265.6,846.2 L265.6,848.3 L265.7,850.1 L265.8,851.8 L265.9,853.4 L265.9,854.9 L266.0,856.3 L266.2,857.6 L266.3,858.9 L266.4,860.2 L266.6,861.4 L266.7,862.5 L266.9,863.6 L267.1,864.7 L267.3,865.8 L267.5,866.8 L267.7,867.8 L267.9,868.7 L268.2,869.7 L268.4,870.6 L268.7,871.5 L268.9,872.4 L269.2,873.3 L269.5,874.1 L269.8,874.9 L270.1,875.8 L270.5,876.6 L270.8,877.4 L271.1,878.1 L271.5,878.9 L271.9,879.6 L272.3,880.4 L272.6,881.1 L273.1,881.8 L273.5,882.5 L273.9,883.2 L274.3,883.9 L274.8,884.5 L275.2,885.2 L275.7,885.8 L276.2,886.5 L276.7,887.1 L277.2,887.7 L277.7,888.3 L278.3,888.9 L278.8,889.5 L279.4,890.1 L279.9,890.7 L280.5,891.2 L281.1,891.8 L281.7,892.3 L282.3,892.9 L282.9,893.4 L283.6,894.0 L284.2,894.5 L284.9,895.0 L285.5,895.5 L286.2,896.0 L286.9,896.5 L287.6,897.0 L288.4,897.5 L289.1,898.0 L289.8,898.4 L290.6,898.9 L291.4,899.3 L292.1,899.8 L292.9,900.2 L293.7,900.7 L294.6,901.1 L295.4,901.5 L296.2,902.0 L297.1,902.4 L298.0,902.8 L298.9,903.2 L299.8,903.6 L300.7,904.0 L301.6,904.4 L302.5,904.7 L303.5,905.1 L304.5,905.5 L305.4,905.8 L306.4,906.2 L307.4,906.5 L308.5,906.9 L309.5,907.2 L310.6,907.6 L311.6,907.9 L312.7,908.2 L313.8,908.6 L314.9,908.9 L316.0,909.2 L317.2,909.5 L318.3,909.8 L319.5,910.1 L320.7,910.4 L321.9,910.7 L323.1,910.9 L324.4,911.2 L325.6,911.5 L326.9,911.7 L328.2,912.0 L329.5,912.3 L330.8,912.5 L332.2,912.8 L333.5,913.0 L334.9,913.2 L336.3,913.5 L337.8,913.7 L339.2,913.9 L340.7,914.1 L342.2,914.3 L343.7,914.5 L345.2,914.7 L346.7,914.9 L348.3,915.1 L349.9,915.3 L351.5,915.5 L353.2,915.7 L354.9,915.9 L356.6,916.0 L358.3,916.2 L360.1,916.3 L361.9,916.5 L363.7,916.7 L365.5,916.8 L367.4,916.9 L369.3,917.1 L371.3,917.2 L373.3,917.3 L375.3,917.5 L377.4,917.6 L379.5,917.7 L381.7,917.8 L383.9,917.9 L386.2,918.0 L388.5,918.1 L390.9,918.2 L393.4,918.3 L395.9,918.3 L398.5,918.4 L401.1,918.5 L403.9,918.6 L406.8,918.6 L409.8,918.7 L412.9,918.7 L416.1,918.8 L419.5,918.8 L423.1,918.9 L426.9,918.9 L431.0,918.9 L435.4,918.9 L440.2,919.0 L445.7,919.0 L452.2,919.0 L460.4,919.0 L479.3,919.0 L498.1,919.0 L506.3,919.0 L512.8,919.0 L518.3,919.0 L523.1,918.9 L527.5,918.9 L531.6,918.9 L535.4,918.9 L539.0,918.8 L542.4,918.8 L545.6,918.7 L548.7,918.7 L551.7,918.6 L554.6,918.6 L557.4,918.5 L560.0,918.4 L562.6,918.3 L565.1,918.3 L567.6,918.2 L570.0,918.1 L572.3,918.0 L574.6,917.9 L576.8,917.8 L579.0,917.7 L581.1,917.6 L583.2,917.5 L585.2,917.3 L587.2,917.2 L589.2,917.1 L591.1,916.9 L593.0,916.8 L594.8,916.7 L596.6,916.5 L598.4,916.3 L600.2,916.2 L601.9,916.0 L603.6,915.9 L605.3,915.7 L607.0,915.5 L608.6,915.3 L610.2,915.1 L611.8,914.9 L613.3,914.7 L614.8,914.5 L616.3,914.3 L617.8,914.1 L619.3,913.9 L620.7,913.7 L622.2,913.5 L623.6,913.2 L625.0,913.0 L626.3,912.8 L627.7,912.5 L629.0,912.3 L630.3,912.0 L631.6,911.7 L632.9,911.5 L634.1,911.2 L635.4,910.9 L636.6,910.7 L637.8,910.4 L639.0,910.1 L640.2,909.8 L641.3,909.5 L642.5,909.2 L643.6,908.9 L644.7,908.6 L645.8,908.2 L646.9,907.9 L647.9,907.6 L649.0,907.2 L650.0,906.9 L651.1,906.5 L652.1,906.2 L653.1,905.8 L654.0,905.5 L655.0,905.1 L656.0,904.7 L656.9,904.4 L657.8,904.0 L658.7,903.6 L659.6,903.2 L660.5,902.8 L661.4,902.4 L662.3,902.0 L663.1,901.5 L663.9,901.1 L664.8,900.7 L665.6,900.2 L666.4,899.8 L667.1,899.3 L667.9,898.9 L668.7,898.4 L669.4,898.0 L670.1,897.5 L670.9,897.0 L671.6,896.5 L672.3,896.0 L673.0,895.5 L673.6,895.0 L674.3,894.5 L674.9,894.0 L675.6,893.4 L676.2,892.9 L676.8,892.3 L677.4,891.8 L678.0,891.2 L678.6,890.7 L679.1,890.1 L679.7,889.5 L680.2,888.9 L680.8,888.3 L681.3,887.7 L681.8,887.1 L682.3,886.5 L682.8,885.8 L683.3,885.2 L683.7,884.5 L684.2,883.9 L684.6,883.2 L685.0,882.5 L685.4,881.8 L685.9,881.1 L686.2,880.4 L686.6,879.6 L687.0,878.9 L687.4,878.1 L687.7,877.4 L688.0,876.6 L688.4,875.8 L688.7,874.9 L689.0,874.1 L689.3,873.3 L689.6,872.4 L689.8,871.5 L690.1,870.6 L690.3,869.7 L690.6,868.7 L690.8,867.8 L691.0,866.8 L691.2,865.8 L691.4,864.7 L691.6,863.6 L691.8,862.5 L691.9,861.4 L692.1,860.2 L692.2,858.9 L692.3,857.6 L692.5,856.3 L692.6,854.9 L692.6,853.4 L692.7,851.8 L692.8,850.1 L692.9,848.3 L692.9,846.2 L693.0,844.0 L693.0,841.3 L693.0,837.8 L693.0,830.0 L693.0,825.0 L693.0,802.9 L693.0,780.9 L693.0,758.8 L693.0,736.7 L693.0,714.7 L693.0,692.6 L693.0,670.5 L693.0,648.4 L693.0,626.4 L693.0,604.3 L693.0,582.2 L693.0,560.2 L693.0,538.1 L693.0,516.0 L693.0,494.0 L693.0,471.9 L693.0,449.8 L693.0,427.8 L693.0,405.7 L693.0,383.6 L693.0,361.6 L693.0,339.5 L693.0,317.4 L693.0,295.3 L693.0,273.3 L693.0,251.2 L693.0,229.1 L693.0,207.1 L693.0,185.0 L693.0,180.0 L693.0,173.4 L693.0,170.1 L692.9,167.5 L692.9,165.3 L692.9,163.3 L692.8,161.5 L692.7,159.8 L692.6,158.2 L692.5,156.7 L692.4,155.2 L692.3,153.9 L692.1,152.5 L692.0,151.3 L691.8,150.0 L691.7,148.8 L691.5,147.7 L691.3,146.5 L691.1,145.4 L690.8,144.4 L690.6,143.3 L690.4,142.3 L690.1,141.3 L689.8,140.3 L689.6,139.4 L689.3,138.4 L689.0,137.5 L688.6,136.6 L688.3,135.7 L688.0,134.8 L687.6,134.0 L687.3,133.1 L686.9,132.3 L686.5,131.5 L686.1,130.7 L685.7,129.9 L685.3,129.1 L684.8,128.3 L684.4,127.6 L683.9,126.8 L683.4,126.1 L682.9,125.4 L682.4,124.7 L681.9,124.0 L681.4,123.3 L680.9,122.6 L680.3,121.9 L679.8,121.2 L679.2,120.6 L678.6,119.9 L678.0,119.3 L677.4,118.7 L676.8,118.0 L676.1,117.4 L675.5,116.8 L674.8,116.2 L674.2,115.6 L673.5,115.0 L672.8,114.5 L672.1,113.9 L671.3,113.3 L670.6,112.8 L669.8,112.2 L669.1,111.7 L668.3,111.1 L667.5,110.6 L666.7,110.1 L665.9,109.6 L665.1,109.1 L664.2,108.6 L663.4,108.1 L662.5,107.6 L661.6,107.1 L660.7,106.6 L659.8,106.2 L658.9,105.7 L658.0,105.3 L657.0,104.8 L656.1,104.4 L655.1,103.9 L654.1,103.5 L653.1,103.1 L652.1,102.7 L651.0,102.2 L650.0,101.8 L648.9,101.4 L647.9,101.0 L646.8,100.6 L645.7,100.3 L644.5,99.9 L643.4,99.5 L642.3,99.1 L641.1,98.8 L639.9,98.4 L638.7,98.1 L637.5,97.7 L636.3,97.4 L635.0,97.1 L633.8,96.7 L632.5,96.4 L631.2,96.1 L629.9,95.8 L628.6,95.5 L627.2,95.2 L625.9,94.9 L624.5,94.6 L623.1,94.3 L621.7,94.1 L620.2,93.8 L618.8,93.5 L617.3,93.3 L615.8,93.0 L614.3,92.8 L612.8,92.5 L611.2,92.3 L609.7,92.0 L608.1,91.8 L606.4,91.6 L604.8,91.4 L603.1,91.2 L601.4,91.0 L599.7,90.8 L598.0,90.6 L596.2,90.4 L594.4,90.2 L592.6,90.0 L590.8,89.8 L588.9,89.7 L587.0,89.5 L585.0,89.3 L583.1,89.2 L581.1,89.0 L579.0,88.9 L576.9,88.8 L574.8,88.6 L572.7,88.5 L570.5,88.4 L568.2,88.3 L565.9,88.1 L563.6,88.0 L561.2,87.9 L558.7,87.8 L556.2,87.7 L553.6,87.7 L550.9,87.6 L548.1,87.5 L545.3,87.4 L542.4,87.4 L539.3,87.3 L536.1,87.3 L532.8,87.2 L529.3,87.2 L525.7,87.1 L521.8,87.1 L517.6,87.1 L513.0,87.0 L507.9,87.0 L502.0,87.0 L494.5,87.0 L479.2,87.0Z" fill="#000" opacity="0.2" filter="url(#fblur3)" transform="translate(479.25,12) scale(0.88,1) translate(-479.25,0)"/>
<path d="M479.3,87.0 L464.0,87.0 L456.5,87.0 L450.6,87.0 L445.5,87.0 L440.9,87.1 L436.7,87.1 L432.8,87.1 L429.2,87.2 L425.7,87.2 L422.4,87.3 L419.2,87.3 L416.1,87.4 L413.2,87.4 L410.4,87.5 L407.6,87.6 L404.9,87.7 L402.3,87.7 L399.8,87.8 L397.3,87.9 L394.9,88.0 L392.6,88.1 L390.3,88.3 L388.0,88.4 L385.8,88.5 L383.7,88.6 L381.6,88.8 L379.5,88.9 L377.4,89.0 L375.4,89.2 L373.5,89.3 L371.5,89.5 L369.6,89.7 L367.7,89.8 L365.9,90.0 L364.1,90.2 L362.3,90.4 L360.5,90.6 L358.8,90.8 L357.1,91.0 L355.4,91.2 L353.7,91.4 L352.1,91.6 L350.4,91.8 L348.8,92.0 L347.3,92.3 L345.7,92.5 L344.2,92.8 L342.7,93.0 L341.2,93.3 L339.7,93.5 L338.3,93.8 L336.8,94.1 L335.4,94.3 L334.0,94.6 L332.6,94.9 L331.3,95.2 L329.9,95.5 L328.6,95.8 L327.3,96.1 L326.0,96.4 L324.7,96.7 L323.5,97.1 L322.2,97.4 L321.0,97.7 L319.8,98.1 L318.6,98.4 L317.4,98.8 L316.2,99.1 L315.1,99.5 L314.0,99.9 L312.8,100.3 L311.7,100.6 L310.6,101.0 L309.6,101.4 L308.5,101.8 L307.5,102.2 L306.4,102.7 L305.4,103.1 L304.4,103.5 L303.4,103.9 L302.4,104.4 L301.5,104.8 L300.5,105.3 L299.6,105.7 L298.7,106.2 L297.8,106.6 L296.9,107.1 L296.0,107.6 L295.1,108.1 L294.3,108.6 L293.4,109.1 L292.6,109.6 L291.8,110.1 L291.0,110.6 L290.2,111.1 L289.4,111.7 L288.7,112.2 L287.9,112.8 L287.2,113.3 L286.4,113.9 L285.7,114.5 L285.0,115.0 L284.3,115.6 L283.7,116.2 L283.0,116.8 L282.4,117.4 L281.7,118.0 L281.1,118.7 L280.5,119.3 L279.9,119.9 L279.3,120.6 L278.7,121.2 L278.2,121.9 L277.6,122.6 L277.1,123.3 L276.6,124.0 L276.1,124.7 L275.6,125.4 L275.1,126.1 L274.6,126.8 L274.1,127.6 L273.7,128.3 L273.2,129.1 L272.8,129.9 L272.4,130.7 L272.0,131.5 L271.6,132.3 L271.2,133.1 L270.9,134.0 L270.5,134.8 L270.2,135.7 L269.9,136.6 L269.5,137.5 L269.2,138.4 L268.9,139.4 L268.7,140.3 L268.4,141.3 L268.1,142.3 L267.9,143.3 L267.7,144.4 L267.4,145.4 L267.2,146.5 L267.0,147.7 L266.8,148.8 L266.7,150.0 L266.5,151.3 L266.4,152.5 L266.2,153.9 L266.1,155.2 L266.0,156.7 L265.9,158.2 L265.8,159.8 L265.7,161.5 L265.6,163.3 L265.6,165.3 L265.6,167.5 L265.5,170.1 L265.5,173.4 L265.5,180.0 L265.5,185.0 L265.5,207.1 L265.5,229.1 L265.5,251.2 L265.5,273.3 L265.5,295.3 L265.5,317.4 L265.5,339.5 L265.5,361.6 L265.5,383.6 L265.5,405.7 L265.5,427.8 L265.5,449.8 L265.5,471.9 L265.5,494.0 L265.5,516.0 L265.5,538.1 L265.5,560.2 L265.5,582.2 L265.5,604.3 L265.5,626.4 L265.5,648.4 L265.5,670.5 L265.5,692.6 L265.5,714.7 L265.5,736.7 L265.5,758.8 L265.5,780.9 L265.5,802.9 L265.5,825.0 L265.5,830.0 L265.5,837.8 L265.5,841.3 L265.5,844.0 L265.6,846.2 L265.6,848.3 L265.7,850.1 L265.8,851.8 L265.9,853.4 L265.9,854.9 L266.0,856.3 L266.2,857.6 L266.3,858.9 L266.4,860.2 L266.6,861.4 L266.7,862.5 L266.9,863.6 L267.1,864.7 L267.3,865.8 L267.5,866.8 L267.7,867.8 L267.9,868.7 L268.2,869.7 L268.4,870.6 L268.7,871.5 L268.9,872.4 L269.2,873.3 L269.5,874.1 L269.8,874.9 L270.1,875.8 L270.5,876.6 L270.8,877.4 L271.1,878.1 L271.5,878.9 L271.9,879.6 L272.3,880.4 L272.6,881.1 L273.1,881.8 L273.5,882.5 L273.9,883.2 L274.3,883.9 L274.8,884.5 L275.2,885.2 L275.7,885.8 L276.2,886.5 L276.7,887.1 L277.2,887.7 L277.7,888.3 L278.3,888.9 L278.8,889.5 L279.4,890.1 L279.9,890.7 L280.5,891.2 L281.1,891.8 L281.7,892.3 L282.3,892.9 L282.9,893.4 L283.6,894.0 L284.2,894.5 L284.9,895.0 L285.5,895.5 L286.2,896.0 L286.9,896.5 L287.6,897.0 L288.4,897.5 L289.1,898.0 L289.8,898.4 L290.6,898.9 L291.4,899.3 L292.1,899.8 L292.9,900.2 L293.7,900.7 L294.6,901.1 L295.4,901.5 L296.2,902.0 L297.1,902.4 L298.0,902.8 L298.9,903.2 L299.8,903.6 L300.7,904.0 L301.6,904.4 L302.5,904.7 L303.5,905.1 L304.5,905.5 L305.4,905.8 L306.4,906.2 L307.4,906.5 L308.5,906.9 L309.5,907.2 L310.6,907.6 L311.6,907.9 L312.7,908.2 L313.8,908.6 L314.9,908.9 L316.0,909.2 L317.2,909.5 L318.3,909.8 L319.5,910.1 L320.7,910.4 L321.9,910.7 L323.1,910.9 L324.4,911.2 L325.6,911.5 L326.9,911.7 L328.2,912.0 L329.5,912.3 L330.8,912.5 L332.2,912.8 L333.5,913.0 L334.9,913.2 L336.3,913.5 L337.8,913.7 L339.2,913.9 L340.7,914.1 L342.2,914.3 L343.7,914.5 L345.2,914.7 L346.7,914.9 L348.3,915.1 L349.9,915.3 L351.5,915.5 L353.2,915.7 L354.9,915.9 L356.6,916.0 L358.3,916.2 L360.1,916.3 L361.9,916.5 L363.7,916.7 L365.5,916.8 L367.4,916.9 L369.3,917.1 L371.3,917.2 L373.3,917.3 L375.3,917.5 L377.4,917.6 L379.5,917.7 L381.7,917.8 L383.9,917.9 L386.2,918.0 L388.5,918.1 L390.9,918.2 L393.4,918.3 L395.9,918.3 L398.5,918.4 L401.1,918.5 L403.9,918.6 L406.8,918.6 L409.8,918.7 L412.9,918.7 L416.1,918.8 L419.5,918.8 L423.1,918.9 L426.9,918.9 L431.0,918.9 L435.4,918.9 L440.2,919.0 L445.7,919.0 L452.2,919.0 L460.4,919.0 L479.3,919.0 L498.1,919.0 L506.3,919.0 L512.8,919.0 L518.3,919.0 L523.1,918.9 L527.5,918.9 L531.6,918.9 L535.4,918.9 L539.0,918.8 L542.4,918.8 L545.6,918.7 L548.7,918.7 L551.7,918.6 L554.6,918.6 L557.4,918.5 L560.0,918.4 L562.6,918.3 L565.1,918.3 L567.6,918.2 L570.0,918.1 L572.3,918.0 L574.6,917.9 L576.8,917.8 L579.0,917.7 L581.1,917.6 L583.2,917.5 L585.2,917.3 L587.2,917.2 L589.2,917.1 L591.1,916.9 L593.0,916.8 L594.8,916.7 L596.6,916.5 L598.4,916.3 L600.2,916.2 L601.9,916.0 L603.6,915.9 L605.3,915.7 L607.0,915.5 L608.6,915.3 L610.2,915.1 L611.8,914.9 L613.3,914.7 L614.8,914.5 L616.3,914.3 L617.8,914.1 L619.3,913.9 L620.7,913.7 L622.2,913.5 L623.6,913.2 L625.0,913.0 L626.3,912.8 L627.7,912.5 L629.0,912.3 L630.3,912.0 L631.6,911.7 L632.9,911.5 L634.1,911.2 L635.4,910.9 L636.6,910.7 L637.8,910.4 L639.0,910.1 L640.2,909.8 L641.3,909.5 L642.5,909.2 L643.6,908.9 L644.7,908.6 L645.8,908.2 L646.9,907.9 L647.9,907.6 L649.0,907.2 L650.0,906.9 L651.1,906.5 L652.1,906.2 L653.1,905.8 L654.0,905.5 L655.0,905.1 L656.0,904.7 L656.9,904.4 L657.8,904.0 L658.7,903.6 L659.6,903.2 L660.5,902.8 L661.4,902.4 L662.3,902.0 L663.1,901.5 L663.9,901.1 L664.8,900.7 L665.6,900.2 L666.4,899.8 L667.1,899.3 L667.9,898.9 L668.7,898.4 L669.4,898.0 L670.1,897.5 L670.9,897.0 L671.6,896.5 L672.3,896.0 L673.0,895.5 L673.6,895.0 L674.3,894.5 L674.9,894.0 L675.6,893.4 L676.2,892.9 L676.8,892.3 L677.4,891.8 L678.0,891.2 L678.6,890.7 L679.1,890.1 L679.7,889.5 L680.2,888.9 L680.8,888.3 L681.3,887.7 L681.8,887.1 L682.3,886.5 L682.8,885.8 L683.3,885.2 L683.7,884.5 L684.2,883.9 L684.6,883.2 L685.0,882.5 L685.4,881.8 L685.9,881.1 L686.2,880.4 L686.6,879.6 L687.0,878.9 L687.4,878.1 L687.7,877.4 L688.0,876.6 L688.4,875.8 L688.7,874.9 L689.0,874.1 L689.3,873.3 L689.6,872.4 L689.8,871.5 L690.1,870.6 L690.3,869.7 L690.6,868.7 L690.8,867.8 L691.0,866.8 L691.2,865.8 L691.4,864.7 L691.6,863.6 L691.8,862.5 L691.9,861.4 L692.1,860.2 L692.2,858.9 L692.3,857.6 L692.5,856.3 L692.6,854.9 L692.6,853.4 L692.7,851.8 L692.8,850.1 L692.9,848.3 L692.9,846.2 L693.0,844.0 L693.0,841.3 L693.0,837.8 L693.0,830.0 L693.0,825.0 L693.0,802.9 L693.0,780.9 L693.0,758.8 L693.0,736.7 L693.0,714.7 L693.0,692.6 L693.0,670.5 L693.0,648.4 L693.0,626.4 L693.0,604.3 L693.0,582.2 L693.0,560.2 L693.0,538.1 L693.0,516.0 L693.0,494.0 L693.0,471.9 L693.0,449.8 L693.0,427.8 L693.0,405.7 L693.0,383.6 L693.0,361.6 L693.0,339.5 L693.0,317.4 L693.0,295.3 L693.0,273.3 L693.0,251.2 L693.0,229.1 L693.0,207.1 L693.0,185.0 L693.0,180.0 L693.0,173.4 L693.0,170.1 L692.9,167.5 L692.9,165.3 L692.9,163.3 L692.8,161.5 L692.7,159.8 L692.6,158.2 L692.5,156.7 L692.4,155.2 L692.3,153.9 L692.1,152.5 L692.0,151.3 L691.8,150.0 L691.7,148.8 L691.5,147.7 L691.3,146.5 L691.1,145.4 L690.8,144.4 L690.6,143.3 L690.4,142.3 L690.1,141.3 L689.8,140.3 L689.6,139.4 L689.3,138.4 L689.0,137.5 L688.6,136.6 L688.3,135.7 L688.0,134.8 L687.6,134.0 L687.3,133.1 L686.9,132.3 L686.5,131.5 L686.1,130.7 L685.7,129.9 L685.3,129.1 L684.8,128.3 L684.4,127.6 L683.9,126.8 L683.4,126.1 L682.9,125.4 L682.4,124.7 L681.9,124.0 L681.4,123.3 L680.9,122.6 L680.3,121.9 L679.8,121.2 L679.2,120.6 L678.6,119.9 L678.0,119.3 L677.4,118.7 L676.8,118.0 L676.1,117.4 L675.5,116.8 L674.8,116.2 L674.2,115.6 L673.5,115.0 L672.8,114.5 L672.1,113.9 L671.3,113.3 L670.6,112.8 L669.8,112.2 L669.1,111.7 L668.3,111.1 L667.5,110.6 L666.7,110.1 L665.9,109.6 L665.1,109.1 L664.2,108.6 L663.4,108.1 L662.5,107.6 L661.6,107.1 L660.7,106.6 L659.8,106.2 L658.9,105.7 L658.0,105.3 L657.0,104.8 L656.1,104.4 L655.1,103.9 L654.1,103.5 L653.1,103.1 L652.1,102.7 L651.0,102.2 L650.0,101.8 L648.9,101.4 L647.9,101.0 L646.8,100.6 L645.7,100.3 L644.5,99.9 L643.4,99.5 L642.3,99.1 L641.1,98.8 L639.9,98.4 L638.7,98.1 L637.5,97.7 L636.3,97.4 L635.0,97.1 L633.8,96.7 L632.5,96.4 L631.2,96.1 L629.9,95.8 L628.6,95.5 L627.2,95.2 L625.9,94.9 L624.5,94.6 L623.1,94.3 L621.7,94.1 L620.2,93.8 L618.8,93.5 L617.3,93.3 L615.8,93.0 L614.3,92.8 L612.8,92.5 L611.2,92.3 L609.7,92.0 L608.1,91.8 L606.4,91.6 L604.8,91.4 L603.1,91.2 L601.4,91.0 L599.7,90.8 L598.0,90.6 L596.2,90.4 L594.4,90.2 L592.6,90.0 L590.8,89.8 L588.9,89.7 L587.0,89.5 L585.0,89.3 L583.1,89.2 L581.1,89.0 L579.0,88.9 L576.9,88.8 L574.8,88.6 L572.7,88.5 L570.5,88.4 L568.2,88.3 L565.9,88.1 L563.6,88.0 L561.2,87.9 L558.7,87.8 L556.2,87.7 L553.6,87.7 L550.9,87.6 L548.1,87.5 L545.3,87.4 L542.4,87.4 L539.3,87.3 L536.1,87.3 L532.8,87.2 L529.3,87.2 L525.7,87.1 L521.8,87.1 L517.6,87.1 L513.0,87.0 L507.9,87.0 L502.0,87.0 L494.5,87.0 L479.2,87.0Z" fill="#000" opacity="0.35" filter="url(#fblur)" transform="translate(479.25,7) scale(0.95,1) translate(-479.25,0)"/>
<path d="M479.3,87.0 L464.0,87.0 L456.5,87.0 L450.6,87.0 L445.5,87.0 L440.9,87.1 L436.7,87.1 L432.8,87.1 L429.2,87.2 L425.7,87.2 L422.4,87.3 L419.2,87.3 L416.1,87.4 L413.2,87.4 L410.4,87.5 L407.6,87.6 L404.9,87.7 L402.3,87.7 L399.8,87.8 L397.3,87.9 L394.9,88.0 L392.6,88.1 L390.3,88.3 L388.0,88.4 L385.8,88.5 L383.7,88.6 L381.6,88.8 L379.5,88.9 L377.4,89.0 L375.4,89.2 L373.5,89.3 L371.5,89.5 L369.6,89.7 L367.7,89.8 L365.9,90.0 L364.1,90.2 L362.3,90.4 L360.5,90.6 L358.8,90.8 L357.1,91.0 L355.4,91.2 L353.7,91.4 L352.1,91.6 L350.4,91.8 L348.8,92.0 L347.3,92.3 L345.7,92.5 L344.2,92.8 L342.7,93.0 L341.2,93.3 L339.7,93.5 L338.3,93.8 L336.8,94.1 L335.4,94.3 L334.0,94.6 L332.6,94.9 L331.3,95.2 L329.9,95.5 L328.6,95.8 L327.3,96.1 L326.0,96.4 L324.7,96.7 L323.5,97.1 L322.2,97.4 L321.0,97.7 L319.8,98.1 L318.6,98.4 L317.4,98.8 L316.2,99.1 L315.1,99.5 L314.0,99.9 L312.8,100.3 L311.7,100.6 L310.6,101.0 L309.6,101.4 L308.5,101.8 L307.5,102.2 L306.4,102.7 L305.4,103.1 L304.4,103.5 L303.4,103.9 L302.4,104.4 L301.5,104.8 L300.5,105.3 L299.6,105.7 L298.7,106.2 L297.8,106.6 L296.9,107.1 L296.0,107.6 L295.1,108.1 L294.3,108.6 L293.4,109.1 L292.6,109.6 L291.8,110.1 L291.0,110.6 L290.2,111.1 L289.4,111.7 L288.7,112.2 L287.9,112.8 L287.2,113.3 L286.4,113.9 L285.7,114.5 L285.0,115.0 L284.3,115.6 L283.7,116.2 L283.0,116.8 L282.4,117.4 L281.7,118.0 L281.1,118.7 L280.5,119.3 L279.9,119.9 L279.3,120.6 L278.7,121.2 L278.2,121.9 L277.6,122.6 L277.1,123.3 L276.6,124.0 L276.1,124.7 L275.6,125.4 L275.1,126.1 L274.6,126.8 L274.1,127.6 L273.7,128.3 L273.2,129.1 L272.8,129.9 L272.4,130.7 L272.0,131.5 L271.6,132.3 L271.2,133.1 L270.9,134.0 L270.5,134.8 L270.2,135.7 L269.9,136.6 L269.5,137.5 L269.2,138.4 L268.9,139.4 L268.7,140.3 L268.4,141.3 L268.1,142.3 L267.9,143.3 L267.7,144.4 L267.4,145.4 L267.2,146.5 L267.0,147.7 L266.8,148.8 L266.7,150.0 L266.5,151.3 L266.4,152.5 L266.2,153.9 L266.1,155.2 L266.0,156.7 L265.9,158.2 L265.8,159.8 L265.7,161.5 L265.6,163.3 L265.6,165.3 L265.6,167.5 L265.5,170.1 L265.5,173.4 L265.5,180.0 L265.5,185.0 L265.5,207.1 L265.5,229.1 L265.5,251.2 L265.5,273.3 L265.5,295.3 L265.5,317.4 L265.5,339.5 L265.5,361.6 L265.5,383.6 L265.5,405.7 L265.5,427.8 L265.5,449.8 L265.5,471.9 L265.5,494.0 L265.5,516.0 L265.5,538.1 L265.5,560.2 L265.5,582.2 L265.5,604.3 L265.5,626.4 L265.5,648.4 L265.5,670.5 L265.5,692.6 L265.5,714.7 L265.5,736.7 L265.5,758.8 L265.5,780.9 L265.5,802.9 L265.5,825.0 L265.5,830.0 L265.5,837.8 L265.5,841.3 L265.5,844.0 L265.6,846.2 L265.6,848.3 L265.7,850.1 L265.8,851.8 L265.9,853.4 L265.9,854.9 L266.0,856.3 L266.2,857.6 L266.3,858.9 L266.4,860.2 L266.6,861.4 L266.7,862.5 L266.9,863.6 L267.1,864.7 L267.3,865.8 L267.5,866.8 L267.7,867.8 L267.9,868.7 L268.2,869.7 L268.4,870.6 L268.7,871.5 L268.9,872.4 L269.2,873.3 L269.5,874.1 L269.8,874.9 L270.1,875.8 L270.5,876.6 L270.8,877.4 L271.1,878.1 L271.5,878.9 L271.9,879.6 L272.3,880.4 L272.6,881.1 L273.1,881.8 L273.5,882.5 L273.9,883.2 L274.3,883.9 L274.8,884.5 L275.2,885.2 L275.7,885.8 L276.2,886.5 L276.7,887.1 L277.2,887.7 L277.7,888.3 L278.3,888.9 L278.8,889.5 L279.4,890.1 L279.9,890.7 L280.5,891.2 L281.1,891.8 L281.7,892.3 L282.3,892.9 L282.9,893.4 L283.6,894.0 L284.2,894.5 L284.9,895.0 L285.5,895.5 L286.2,896.0 L286.9,896.5 L287.6,897.0 L288.4,897.5 L289.1,898.0 L289.8,898.4 L290.6,898.9 L291.4,899.3 L292.1,899.8 L292.9,900.2 L293.7,900.7 L294.6,901.1 L295.4,901.5 L296.2,902.0 L297.1,902.4 L298.0,902.8 L298.9,903.2 L299.8,903.6 L300.7,904.0 L301.6,904.4 L302.5,904.7 L303.5,905.1 L304.5,905.5 L305.4,905.8 L306.4,906.2 L307.4,906.5 L308.5,906.9 L309.5,907.2 L310.6,907.6 L311.6,907.9 L312.7,908.2 L313.8,908.6 L314.9,908.9 L316.0,909.2 L317.2,909.5 L318.3,909.8 L319.5,910.1 L320.7,910.4 L321.9,910.7 L323.1,910.9 L324.4,911.2 L325.6,911.5 L326.9,911.7 L328.2,912.0 L329.5,912.3 L330.8,912.5 L332.2,912.8 L333.5,913.0 L334.9,913.2 L336.3,913.5 L337.8,913.7 L339.2,913.9 L340.7,914.1 L342.2,914.3 L343.7,914.5 L345.2,914.7 L346.7,914.9 L348.3,915.1 L349.9,915.3 L351.5,915.5 L353.2,915.7 L354.9,915.9 L356.6,916.0 L358.3,916.2 L360.1,916.3 L361.9,916.5 L363.7,916.7 L365.5,916.8 L367.4,916.9 L369.3,917.1 L371.3,917.2 L373.3,917.3 L375.3,917.5 L377.4,917.6 L379.5,917.7 L381.7,917.8 L383.9,917.9 L386.2,918.0 L388.5,918.1 L390.9,918.2 L393.4,918.3 L395.9,918.3 L398.5,918.4 L401.1,918.5 L403.9,918.6 L406.8,918.6 L409.8,918.7 L412.9,918.7 L416.1,918.8 L419.5,918.8 L423.1,918.9 L426.9,918.9 L431.0,918.9 L435.4,918.9 L440.2,919.0 L445.7,919.0 L452.2,919.0 L460.4,919.0 L479.3,919.0 L498.1,919.0 L506.3,919.0 L512.8,919.0 L518.3,919.0 L523.1,918.9 L527.5,918.9 L531.6,918.9 L535.4,918.9 L539.0,918.8 L542.4,918.8 L545.6,918.7 L548.7,918.7 L551.7,918.6 L554.6,918.6 L557.4,918.5 L560.0,918.4 L562.6,918.3 L565.1,918.3 L567.6,918.2 L570.0,918.1 L572.3,918.0 L574.6,917.9 L576.8,917.8 L579.0,917.7 L581.1,917.6 L583.2,917.5 L585.2,917.3 L587.2,917.2 L589.2,917.1 L591.1,916.9 L593.0,916.8 L594.8,916.7 L596.6,916.5 L598.4,916.3 L600.2,916.2 L601.9,916.0 L603.6,915.9 L605.3,915.7 L607.0,915.5 L608.6,915.3 L610.2,915.1 L611.8,914.9 L613.3,914.7 L614.8,914.5 L616.3,914.3 L617.8,914.1 L619.3,913.9 L620.7,913.7 L622.2,913.5 L623.6,913.2 L625.0,913.0 L626.3,912.8 L627.7,912.5 L629.0,912.3 L630.3,912.0 L631.6,911.7 L632.9,911.5 L634.1,911.2 L635.4,910.9 L636.6,910.7 L637.8,910.4 L639.0,910.1 L640.2,909.8 L641.3,909.5 L642.5,909.2 L643.6,908.9 L644.7,908.6 L645.8,908.2 L646.9,907.9 L647.9,907.6 L649.0,907.2 L650.0,906.9 L651.1,906.5 L652.1,906.2 L653.1,905.8 L654.0,905.5 L655.0,905.1 L656.0,904.7 L656.9,904.4 L657.8,904.0 L658.7,903.6 L659.6,903.2 L660.5,902.8 L661.4,902.4 L662.3,902.0 L663.1,901.5 L663.9,901.1 L664.8,900.7 L665.6,900.2 L666.4,899.8 L667.1,899.3 L667.9,898.9 L668.7,898.4 L669.4,898.0 L670.1,897.5 L670.9,897.0 L671.6,896.5 L672.3,896.0 L673.0,895.5 L673.6,895.0 L674.3,894.5 L674.9,894.0 L675.6,893.4 L676.2,892.9 L676.8,892.3 L677.4,891.8 L678.0,891.2 L678.6,890.7 L679.1,890.1 L679.7,889.5 L680.2,888.9 L680.8,888.3 L681.3,887.7 L681.8,887.1 L682.3,886.5 L682.8,885.8 L683.3,885.2 L683.7,884.5 L684.2,883.9 L684.6,883.2 L685.0,882.5 L685.4,881.8 L685.9,881.1 L686.2,880.4 L686.6,879.6 L687.0,878.9 L687.4,878.1 L687.7,877.4 L688.0,876.6 L688.4,875.8 L688.7,874.9 L689.0,874.1 L689.3,873.3 L689.6,872.4 L689.8,871.5 L690.1,870.6 L690.3,869.7 L690.6,868.7 L690.8,867.8 L691.0,866.8 L691.2,865.8 L691.4,864.7 L691.6,863.6 L691.8,862.5 L691.9,861.4 L692.1,860.2 L692.2,858.9 L692.3,857.6 L692.5,856.3 L692.6,854.9 L692.6,853.4 L692.7,851.8 L692.8,850.1 L692.9,848.3 L692.9,846.2 L693.0,844.0 L693.0,841.3 L693.0,837.8 L693.0,830.0 L693.0,825.0 L693.0,802.9 L693.0,780.9 L693.0,758.8 L693.0,736.7 L693.0,714.7 L693.0,692.6 L693.0,670.5 L693.0,648.4 L693.0,626.4 L693.0,604.3 L693.0,582.2 L693.0,560.2 L693.0,538.1 L693.0,516.0 L693.0,494.0 L693.0,471.9 L693.0,449.8 L693.0,427.8 L693.0,405.7 L693.0,383.6 L693.0,361.6 L693.0,339.5 L693.0,317.4 L693.0,295.3 L693.0,273.3 L693.0,251.2 L693.0,229.1 L693.0,207.1 L693.0,185.0 L693.0,180.0 L693.0,173.4 L693.0,170.1 L692.9,167.5 L692.9,165.3 L692.9,163.3 L692.8,161.5 L692.7,159.8 L692.6,158.2 L692.5,156.7 L692.4,155.2 L692.3,153.9 L692.1,152.5 L692.0,151.3 L691.8,150.0 L691.7,148.8 L691.5,147.7 L691.3,146.5 L691.1,145.4 L690.8,144.4 L690.6,143.3 L690.4,142.3 L690.1,141.3 L689.8,140.3 L689.6,139.4 L689.3,138.4 L689.0,137.5 L688.6,136.6 L688.3,135.7 L688.0,134.8 L687.6,134.0 L687.3,133.1 L686.9,132.3 L686.5,131.5 L686.1,130.7 L685.7,129.9 L685.3,129.1 L684.8,128.3 L684.4,127.6 L683.9,126.8 L683.4,126.1 L682.9,125.4 L682.4,124.7 L681.9,124.0 L681.4,123.3 L680.9,122.6 L680.3,121.9 L679.8,121.2 L679.2,120.6 L678.6,119.9 L678.0,119.3 L677.4,118.7 L676.8,118.0 L676.1,117.4 L675.5,116.8 L674.8,116.2 L674.2,115.6 L673.5,115.0 L672.8,114.5 L672.1,113.9 L671.3,113.3 L670.6,112.8 L669.8,112.2 L669.1,111.7 L668.3,111.1 L667.5,110.6 L666.7,110.1 L665.9,109.6 L665.1,109.1 L664.2,108.6 L663.4,108.1 L662.5,107.6 L661.6,107.1 L660.7,106.6 L659.8,106.2 L658.9,105.7 L658.0,105.3 L657.0,104.8 L656.1,104.4 L655.1,103.9 L654.1,103.5 L653.1,103.1 L652.1,102.7 L651.0,102.2 L650.0,101.8 L648.9,101.4 L647.9,101.0 L646.8,100.6 L645.7,100.3 L644.5,99.9 L643.4,99.5 L642.3,99.1 L641.1,98.8 L639.9,98.4 L638.7,98.1 L637.5,97.7 L636.3,97.4 L635.0,97.1 L633.8,96.7 L632.5,96.4 L631.2,96.1 L629.9,95.8 L628.6,95.5 L627.2,95.2 L625.9,94.9 L624.5,94.6 L623.1,94.3 L621.7,94.1 L620.2,93.8 L618.8,93.5 L617.3,93.3 L615.8,93.0 L614.3,92.8 L612.8,92.5 L611.2,92.3 L609.7,92.0 L608.1,91.8 L606.4,91.6 L604.8,91.4 L603.1,91.2 L601.4,91.0 L599.7,90.8 L598.0,90.6 L596.2,90.4 L594.4,90.2 L592.6,90.0 L590.8,89.8 L588.9,89.7 L587.0,89.5 L585.0,89.3 L583.1,89.2 L581.1,89.0 L579.0,88.9 L576.9,88.8 L574.8,88.6 L572.7,88.5 L570.5,88.4 L568.2,88.3 L565.9,88.1 L563.6,88.0 L561.2,87.9 L558.7,87.8 L556.2,87.7 L553.6,87.7 L550.9,87.6 L548.1,87.5 L545.3,87.4 L542.4,87.4 L539.3,87.3 L536.1,87.3 L532.8,87.2 L529.3,87.2 L525.7,87.1 L521.8,87.1 L517.6,87.1 L513.0,87.0 L507.9,87.0 L502.0,87.0 L494.5,87.0 L479.2,87.0Z" fill="#000" opacity="0.3" filter="url(#fblur2)" transform="translate(479.25,3) scale(0.985,1) translate(-479.25,0)"/>
<!-- frame -->
<path d="M479.3,87.0 L464.0,87.0 L456.5,87.0 L450.6,87.0 L445.5,87.0 L440.9,87.1 L436.7,87.1 L432.8,87.1 L429.2,87.2 L425.7,87.2 L422.4,87.3 L419.2,87.3 L416.1,87.4 L413.2,87.4 L410.4,87.5 L407.6,87.6 L404.9,87.7 L402.3,87.7 L399.8,87.8 L397.3,87.9 L394.9,88.0 L392.6,88.1 L390.3,88.3 L388.0,88.4 L385.8,88.5 L383.7,88.6 L381.6,88.8 L379.5,88.9 L377.4,89.0 L375.4,89.2 L373.5,89.3 L371.5,89.5 L369.6,89.7 L367.7,89.8 L365.9,90.0 L364.1,90.2 L362.3,90.4 L360.5,90.6 L358.8,90.8 L357.1,91.0 L355.4,91.2 L353.7,91.4 L352.1,91.6 L350.4,91.8 L348.8,92.0 L347.3,92.3 L345.7,92.5 L344.2,92.8 L342.7,93.0 L341.2,93.3 L339.7,93.5 L338.3,93.8 L336.8,94.1 L335.4,94.3 L334.0,94.6 L332.6,94.9 L331.3,95.2 L329.9,95.5 L328.6,95.8 L327.3,96.1 L326.0,96.4 L324.7,96.7 L323.5,97.1 L322.2,97.4 L321.0,97.7 L319.8,98.1 L318.6,98.4 L317.4,98.8 L316.2,99.1 L315.1,99.5 L314.0,99.9 L312.8,100.3 L311.7,100.6 L310.6,101.0 L309.6,101.4 L308.5,101.8 L307.5,102.2 L306.4,102.7 L305.4,103.1 L304.4,103.5 L303.4,103.9 L302.4,104.4 L301.5,104.8 L300.5,105.3 L299.6,105.7 L298.7,106.2 L297.8,106.6 L296.9,107.1 L296.0,107.6 L295.1,108.1 L294.3,108.6 L293.4,109.1 L292.6,109.6 L291.8,110.1 L291.0,110.6 L290.2,111.1 L289.4,111.7 L288.7,112.2 L287.9,112.8 L287.2,113.3 L286.4,113.9 L285.7,114.5 L285.0,115.0 L284.3,115.6 L283.7,116.2 L283.0,116.8 L282.4,117.4 L281.7,118.0 L281.1,118.7 L280.5,119.3 L279.9,119.9 L279.3,120.6 L278.7,121.2 L278.2,121.9 L277.6,122.6 L277.1,123.3 L276.6,124.0 L276.1,124.7 L275.6,125.4 L275.1,126.1 L274.6,126.8 L274.1,127.6 L273.7,128.3 L273.2,129.1 L272.8,129.9 L272.4,130.7 L272.0,131.5 L271.6,132.3 L271.2,133.1 L270.9,134.0 L270.5,134.8 L270.2,135.7 L269.9,136.6 L269.5,137.5 L269.2,138.4 L268.9,139.4 L268.7,140.3 L268.4,141.3 L268.1,142.3 L267.9,143.3 L267.7,144.4 L267.4,145.4 L267.2,146.5 L267.0,147.7 L266.8,148.8 L266.7,150.0 L266.5,151.3 L266.4,152.5 L266.2,153.9 L266.1,155.2 L266.0,156.7 L265.9,158.2 L265.8,159.8 L265.7,161.5 L265.6,163.3 L265.6,165.3 L265.6,167.5 L265.5,170.1 L265.5,173.4 L265.5,180.0 L265.5,185.0 L265.5,207.1 L265.5,229.1 L265.5,251.2 L265.5,273.3 L265.5,295.3 L265.5,317.4 L265.5,339.5 L265.5,361.6 L265.5,383.6 L265.5,405.7 L265.5,427.8 L265.5,449.8 L265.5,471.9 L265.5,494.0 L265.5,516.0 L265.5,538.1 L265.5,560.2 L265.5,582.2 L265.5,604.3 L265.5,626.4 L265.5,648.4 L265.5,670.5 L265.5,692.6 L265.5,714.7 L265.5,736.7 L265.5,758.8 L265.5,780.9 L265.5,802.9 L265.5,825.0 L265.5,830.0 L265.5,837.8 L265.5,841.3 L265.5,844.0 L265.6,846.2 L265.6,848.3 L265.7,850.1 L265.8,851.8 L265.9,853.4 L265.9,854.9 L266.0,856.3 L266.2,857.6 L266.3,858.9 L266.4,860.2 L266.6,861.4 L266.7,862.5 L266.9,863.6 L267.1,864.7 L267.3,865.8 L267.5,866.8 L267.7,867.8 L267.9,868.7 L268.2,869.7 L268.4,870.6 L268.7,871.5 L268.9,872.4 L269.2,873.3 L269.5,874.1 L269.8,874.9 L270.1,875.8 L270.5,876.6 L270.8,877.4 L271.1,878.1 L271.5,878.9 L271.9,879.6 L272.3,880.4 L272.6,881.1 L273.1,881.8 L273.5,882.5 L273.9,883.2 L274.3,883.9 L274.8,884.5 L275.2,885.2 L275.7,885.8 L276.2,886.5 L276.7,887.1 L277.2,887.7 L277.7,888.3 L278.3,888.9 L278.8,889.5 L279.4,890.1 L279.9,890.7 L280.5,891.2 L281.1,891.8 L281.7,892.3 L282.3,892.9 L282.9,893.4 L283.6,894.0 L284.2,894.5 L284.9,895.0 L285.5,895.5 L286.2,896.0 L286.9,896.5 L287.6,897.0 L288.4,897.5 L289.1,898.0 L289.8,898.4 L290.6,898.9 L291.4,899.3 L292.1,899.8 L292.9,900.2 L293.7,900.7 L294.6,901.1 L295.4,901.5 L296.2,902.0 L297.1,902.4 L298.0,902.8 L298.9,903.2 L299.8,903.6 L300.7,904.0 L301.6,904.4 L302.5,904.7 L303.5,905.1 L304.5,905.5 L305.4,905.8 L306.4,906.2 L307.4,906.5 L308.5,906.9 L309.5,907.2 L310.6,907.6 L311.6,907.9 L312.7,908.2 L313.8,908.6 L314.9,908.9 L316.0,909.2 L317.2,909.5 L318.3,909.8 L319.5,910.1 L320.7,910.4 L321.9,910.7 L323.1,910.9 L324.4,911.2 L325.6,911.5 L326.9,911.7 L328.2,912.0 L329.5,912.3 L330.8,912.5 L332.2,912.8 L333.5,913.0 L334.9,913.2 L336.3,913.5 L337.8,913.7 L339.2,913.9 L340.7,914.1 L342.2,914.3 L343.7,914.5 L345.2,914.7 L346.7,914.9 L348.3,915.1 L349.9,915.3 L351.5,915.5 L353.2,915.7 L354.9,915.9 L356.6,916.0 L358.3,916.2 L360.1,916.3 L361.9,916.5 L363.7,916.7 L365.5,916.8 L367.4,916.9 L369.3,917.1 L371.3,917.2 L373.3,917.3 L375.3,917.5 L377.4,917.6 L379.5,917.7 L381.7,917.8 L383.9,917.9 L386.2,918.0 L388.5,918.1 L390.9,918.2 L393.4,918.3 L395.9,918.3 L398.5,918.4 L401.1,918.5 L403.9,918.6 L406.8,918.6 L409.8,918.7 L412.9,918.7 L416.1,918.8 L419.5,918.8 L423.1,918.9 L426.9,918.9 L431.0,918.9 L435.4,918.9 L440.2,919.0 L445.7,919.0 L452.2,919.0 L460.4,919.0 L479.3,919.0 L498.1,919.0 L506.3,919.0 L512.8,919.0 L518.3,919.0 L523.1,918.9 L527.5,918.9 L531.6,918.9 L535.4,918.9 L539.0,918.8 L542.4,918.8 L545.6,918.7 L548.7,918.7 L551.7,918.6 L554.6,918.6 L557.4,918.5 L560.0,918.4 L562.6,918.3 L565.1,918.3 L567.6,918.2 L570.0,918.1 L572.3,918.0 L574.6,917.9 L576.8,917.8 L579.0,917.7 L581.1,917.6 L583.2,917.5 L585.2,917.3 L587.2,917.2 L589.2,917.1 L591.1,916.9 L593.0,916.8 L594.8,916.7 L596.6,916.5 L598.4,916.3 L600.2,916.2 L601.9,916.0 L603.6,915.9 L605.3,915.7 L607.0,915.5 L608.6,915.3 L610.2,915.1 L611.8,914.9 L613.3,914.7 L614.8,914.5 L616.3,914.3 L617.8,914.1 L619.3,913.9 L620.7,913.7 L622.2,913.5 L623.6,913.2 L625.0,913.0 L626.3,912.8 L627.7,912.5 L629.0,912.3 L630.3,912.0 L631.6,911.7 L632.9,911.5 L634.1,911.2 L635.4,910.9 L636.6,910.7 L637.8,910.4 L639.0,910.1 L640.2,909.8 L641.3,909.5 L642.5,909.2 L643.6,908.9 L644.7,908.6 L645.8,908.2 L646.9,907.9 L647.9,907.6 L649.0,907.2 L650.0,906.9 L651.1,906.5 L652.1,906.2 L653.1,905.8 L654.0,905.5 L655.0,905.1 L656.0,904.7 L656.9,904.4 L657.8,904.0 L658.7,903.6 L659.6,903.2 L660.5,902.8 L661.4,902.4 L662.3,902.0 L663.1,901.5 L663.9,901.1 L664.8,900.7 L665.6,900.2 L666.4,899.8 L667.1,899.3 L667.9,898.9 L668.7,898.4 L669.4,898.0 L670.1,897.5 L670.9,897.0 L671.6,896.5 L672.3,896.0 L673.0,895.5 L673.6,895.0 L674.3,894.5 L674.9,894.0 L675.6,893.4 L676.2,892.9 L676.8,892.3 L677.4,891.8 L678.0,891.2 L678.6,890.7 L679.1,890.1 L679.7,889.5 L680.2,888.9 L680.8,888.3 L681.3,887.7 L681.8,887.1 L682.3,886.5 L682.8,885.8 L683.3,885.2 L683.7,884.5 L684.2,883.9 L684.6,883.2 L685.0,882.5 L685.4,881.8 L685.9,881.1 L686.2,880.4 L686.6,879.6 L687.0,878.9 L687.4,878.1 L687.7,877.4 L688.0,876.6 L688.4,875.8 L688.7,874.9 L689.0,874.1 L689.3,873.3 L689.6,872.4 L689.8,871.5 L690.1,870.6 L690.3,869.7 L690.6,868.7 L690.8,867.8 L691.0,866.8 L691.2,865.8 L691.4,864.7 L691.6,863.6 L691.8,862.5 L691.9,861.4 L692.1,860.2 L692.2,858.9 L692.3,857.6 L692.5,856.3 L692.6,854.9 L692.6,853.4 L692.7,851.8 L692.8,850.1 L692.9,848.3 L692.9,846.2 L693.0,844.0 L693.0,841.3 L693.0,837.8 L693.0,830.0 L693.0,825.0 L693.0,802.9 L693.0,780.9 L693.0,758.8 L693.0,736.7 L693.0,714.7 L693.0,692.6 L693.0,670.5 L693.0,648.4 L693.0,626.4 L693.0,604.3 L693.0,582.2 L693.0,560.2 L693.0,538.1 L693.0,516.0 L693.0,494.0 L693.0,471.9 L693.0,449.8 L693.0,427.8 L693.0,405.7 L693.0,383.6 L693.0,361.6 L693.0,339.5 L693.0,317.4 L693.0,295.3 L693.0,273.3 L693.0,251.2 L693.0,229.1 L693.0,207.1 L693.0,185.0 L693.0,180.0 L693.0,173.4 L693.0,170.1 L692.9,167.5 L692.9,165.3 L692.9,163.3 L692.8,161.5 L692.7,159.8 L692.6,158.2 L692.5,156.7 L692.4,155.2 L692.3,153.9 L692.1,152.5 L692.0,151.3 L691.8,150.0 L691.7,148.8 L691.5,147.7 L691.3,146.5 L691.1,145.4 L690.8,144.4 L690.6,143.3 L690.4,142.3 L690.1,141.3 L689.8,140.3 L689.6,139.4 L689.3,138.4 L689.0,137.5 L688.6,136.6 L688.3,135.7 L688.0,134.8 L687.6,134.0 L687.3,133.1 L686.9,132.3 L686.5,131.5 L686.1,130.7 L685.7,129.9 L685.3,129.1 L684.8,128.3 L684.4,127.6 L683.9,126.8 L683.4,126.1 L682.9,125.4 L682.4,124.7 L681.9,124.0 L681.4,123.3 L680.9,122.6 L680.3,121.9 L679.8,121.2 L679.2,120.6 L678.6,119.9 L678.0,119.3 L677.4,118.7 L676.8,118.0 L676.1,117.4 L675.5,116.8 L674.8,116.2 L674.2,115.6 L673.5,115.0 L672.8,114.5 L672.1,113.9 L671.3,113.3 L670.6,112.8 L669.8,112.2 L669.1,111.7 L668.3,111.1 L667.5,110.6 L666.7,110.1 L665.9,109.6 L665.1,109.1 L664.2,108.6 L663.4,108.1 L662.5,107.6 L661.6,107.1 L660.7,106.6 L659.8,106.2 L658.9,105.7 L658.0,105.3 L657.0,104.8 L656.1,104.4 L655.1,103.9 L654.1,103.5 L653.1,103.1 L652.1,102.7 L651.0,102.2 L650.0,101.8 L648.9,101.4 L647.9,101.0 L646.8,100.6 L645.7,100.3 L644.5,99.9 L643.4,99.5 L642.3,99.1 L641.1,98.8 L639.9,98.4 L638.7,98.1 L637.5,97.7 L636.3,97.4 L635.0,97.1 L633.8,96.7 L632.5,96.4 L631.2,96.1 L629.9,95.8 L628.6,95.5 L627.2,95.2 L625.9,94.9 L624.5,94.6 L623.1,94.3 L621.7,94.1 L620.2,93.8 L618.8,93.5 L617.3,93.3 L615.8,93.0 L614.3,92.8 L612.8,92.5 L611.2,92.3 L609.7,92.0 L608.1,91.8 L606.4,91.6 L604.8,91.4 L603.1,91.2 L601.4,91.0 L599.7,90.8 L598.0,90.6 L596.2,90.4 L594.4,90.2 L592.6,90.0 L590.8,89.8 L588.9,89.7 L587.0,89.5 L585.0,89.3 L583.1,89.2 L581.1,89.0 L579.0,88.9 L576.9,88.8 L574.8,88.6 L572.7,88.5 L570.5,88.4 L568.2,88.3 L565.9,88.1 L563.6,88.0 L561.2,87.9 L558.7,87.8 L556.2,87.7 L553.6,87.7 L550.9,87.6 L548.1,87.5 L545.3,87.4 L542.4,87.4 L539.3,87.3 L536.1,87.3 L532.8,87.2 L529.3,87.2 L525.7,87.1 L521.8,87.1 L517.6,87.1 L513.0,87.0 L507.9,87.0 L502.0,87.0 L494.5,87.0 L479.2,87.0Z" fill="#2a2a2a"/>
<path d="M479.3,88.9 L464.0,88.9 L456.6,88.9 L450.6,88.9 L445.5,88.9 L440.9,89.0 L436.7,89.0 L432.8,89.0 L429.2,89.1 L425.7,89.1 L422.4,89.2 L419.2,89.2 L416.2,89.3 L413.2,89.3 L410.4,89.4 L407.7,89.5 L405.0,89.6 L402.4,89.6 L399.9,89.7 L397.4,89.8 L395.0,89.9 L392.7,90.0 L390.4,90.2 L388.1,90.3 L385.9,90.4 L383.8,90.5 L381.7,90.7 L379.6,90.8 L377.6,90.9 L375.6,91.1 L373.6,91.2 L371.7,91.4 L369.8,91.6 L367.9,91.7 L366.1,91.9 L364.3,92.1 L362.5,92.3 L360.7,92.4 L359.0,92.6 L357.3,92.8 L355.6,93.0 L353.9,93.3 L352.3,93.5 L350.7,93.7 L349.1,93.9 L347.6,94.1 L346.0,94.4 L344.5,94.6 L343.0,94.9 L341.5,95.1 L340.0,95.4 L338.6,95.6 L337.2,95.9 L335.8,96.2 L334.4,96.5 L333.0,96.7 L331.7,97.0 L330.3,97.3 L329.0,97.6 L327.7,97.9 L326.4,98.2 L325.2,98.6 L323.9,98.9 L322.7,99.2 L321.5,99.5 L320.3,99.9 L319.1,100.2 L317.9,100.6 L316.8,100.9 L315.7,101.3 L314.5,101.7 L313.4,102.0 L312.3,102.4 L311.3,102.8 L310.2,103.2 L309.2,103.6 L308.1,104.0 L307.1,104.4 L306.1,104.8 L305.1,105.2 L304.2,105.6 L303.2,106.0 L302.2,106.5 L301.3,106.9 L300.4,107.3 L299.5,107.8 L298.6,108.2 L297.7,108.7 L296.9,109.2 L296.0,109.6 L295.2,110.1 L294.4,110.6 L293.5,111.1 L292.7,111.6 L292.0,112.1 L291.2,112.6 L290.4,113.1 L289.7,113.6 L289.0,114.2 L288.2,114.7 L287.5,115.3 L286.8,115.8 L286.1,116.4 L285.5,116.9 L284.8,117.5 L284.2,118.1 L283.5,118.7 L282.9,119.2 L282.3,119.8 L281.7,120.5 L281.1,121.1 L280.6,121.7 L280.0,122.3 L279.5,123.0 L278.9,123.6 L278.4,124.3 L277.9,124.9 L277.4,125.6 L276.9,126.3 L276.4,127.0 L276.0,127.7 L275.5,128.4 L275.1,129.1 L274.6,129.9 L274.2,130.6 L273.8,131.4 L273.4,132.2 L273.0,133.0 L272.7,133.8 L272.3,134.6 L272.0,135.4 L271.6,136.3 L271.3,137.1 L271.0,138.0 L270.7,138.9 L270.4,139.8 L270.1,140.7 L269.9,141.7 L269.6,142.7 L269.4,143.7 L269.1,144.7 L268.9,145.7 L268.7,146.8 L268.5,147.9 L268.3,149.1 L268.2,150.2 L268.0,151.4 L267.9,152.7 L267.7,154.0 L267.6,155.4 L267.5,156.8 L267.4,158.3 L267.3,159.9 L267.2,161.6 L267.1,163.4 L267.1,165.4 L267.1,167.6 L267.0,170.1 L267.0,173.4 L267.0,180.0 L267.0,185.0 L267.0,207.1 L267.0,229.1 L267.0,251.2 L267.0,273.3 L267.0,295.3 L267.0,317.4 L267.0,339.5 L267.0,361.6 L267.0,383.6 L267.0,405.7 L267.0,427.8 L267.0,449.8 L267.0,471.9 L267.0,494.0 L267.0,516.0 L267.0,538.1 L267.0,560.2 L267.0,582.2 L267.0,604.3 L267.0,626.4 L267.0,648.4 L267.0,670.5 L267.0,692.6 L267.0,714.7 L267.0,736.7 L267.0,758.8 L267.0,780.9 L267.0,802.9 L267.0,825.0 L267.0,830.0 L267.0,837.8 L267.0,841.3 L267.0,843.9 L267.1,846.2 L267.1,848.2 L267.2,850.1 L267.3,851.7 L267.4,853.3 L267.4,854.8 L267.5,856.2 L267.7,857.5 L267.8,858.8 L267.9,860.0 L268.1,861.2 L268.2,862.3 L268.4,863.4 L268.6,864.4 L268.8,865.5 L269.0,866.5 L269.2,867.4 L269.5,868.4 L269.7,869.3 L270.0,870.2 L270.2,871.1 L270.5,871.9 L270.8,872.7 L271.2,873.5 L271.5,874.3 L271.8,875.1 L272.2,875.8 L272.5,876.6 L272.9,877.3 L273.3,878.0 L273.7,878.7 L274.2,879.3 L274.6,880.0 L275.1,880.6 L275.5,881.2 L276.0,881.8 L276.5,882.4 L277.0,883.0 L277.5,883.6 L278.0,884.1 L278.6,884.6 L279.1,885.2 L279.7,885.7 L280.2,886.2 L280.8,886.6 L281.4,887.1 L282.0,887.6 L282.6,888.0 L283.2,888.4 L283.8,888.9 L284.4,889.3 L285.1,889.7 L285.7,890.1 L286.4,890.5 L287.1,890.9 L287.7,891.3 L288.4,891.7 L289.1,892.0 L289.8,892.4 L290.5,892.8 L291.2,893.1 L292.0,893.5 L292.7,893.8 L293.4,894.1 L294.2,894.5 L295.0,894.8 L295.7,895.2 L296.5,895.5 L297.3,895.8 L298.1,896.1 L298.9,896.4 L299.8,896.8 L300.6,897.1 L301.5,897.4 L302.3,897.7 L303.2,898.0 L304.1,898.3 L305.0,898.6 L305.9,898.9 L306.8,899.2 L307.8,899.4 L308.7,899.7 L309.7,900.0 L310.7,900.3 L311.7,900.6 L312.7,900.8 L313.7,901.1 L314.7,901.4 L315.8,901.7 L316.9,901.9 L317.9,902.2 L319.0,902.4 L320.2,902.7 L321.3,902.9 L322.4,903.2 L323.6,903.4 L324.8,903.7 L326.0,903.9 L327.2,904.1 L328.4,904.4 L329.7,904.6 L330.9,904.8 L332.2,905.1 L333.5,905.3 L334.8,905.5 L336.2,905.7 L337.6,905.9 L338.9,906.1 L340.3,906.3 L341.8,906.5 L343.2,906.7 L344.7,906.9 L346.2,907.1 L347.7,907.2 L349.2,907.4 L350.8,907.6 L352.4,907.8 L354.0,907.9 L355.7,908.1 L357.3,908.2 L359.0,908.4 L360.8,908.6 L362.5,908.7 L364.3,908.8 L366.1,909.0 L368.0,909.1 L369.9,909.2 L371.8,909.4 L373.8,909.5 L375.8,909.6 L377.8,909.7 L379.9,909.8 L382.1,909.9 L384.3,910.0 L386.5,910.1 L388.8,910.2 L391.2,910.3 L393.6,910.4 L396.1,910.5 L398.7,910.5 L401.3,910.6 L404.1,910.7 L406.9,910.7 L409.9,910.8 L413.0,910.8 L416.2,910.9 L419.6,910.9 L423.1,911.0 L426.9,911.0 L431.0,911.0 L435.4,911.0 L440.3,911.1 L445.7,911.1 L452.2,911.1 L460.4,911.1 L479.3,911.1 L498.1,911.1 L506.3,911.1 L512.8,911.1 L518.2,911.1 L523.1,911.0 L527.5,911.0 L531.6,911.0 L535.4,911.0 L538.9,910.9 L542.3,910.9 L545.5,910.8 L548.6,910.8 L551.6,910.7 L554.4,910.7 L557.2,910.6 L559.8,910.5 L562.4,910.5 L564.9,910.4 L567.3,910.3 L569.7,910.2 L572.0,910.1 L574.2,910.0 L576.4,909.9 L578.6,909.8 L580.7,909.7 L582.7,909.6 L584.7,909.5 L586.7,909.4 L588.6,909.2 L590.5,909.1 L592.4,909.0 L594.2,908.8 L596.0,908.7 L597.7,908.6 L599.5,908.4 L601.2,908.2 L602.8,908.1 L604.5,907.9 L606.1,907.8 L607.7,907.6 L609.3,907.4 L610.8,907.2 L612.3,907.1 L613.8,906.9 L615.3,906.7 L616.7,906.5 L618.2,906.3 L619.6,906.1 L620.9,905.9 L622.3,905.7 L623.7,905.5 L625.0,905.3 L626.3,905.1 L627.6,904.8 L628.8,904.6 L630.1,904.4 L631.3,904.1 L632.5,903.9 L633.7,903.7 L634.9,903.4 L636.1,903.2 L637.2,902.9 L638.3,902.7 L639.5,902.4 L640.6,902.2 L641.6,901.9 L642.7,901.7 L643.8,901.4 L644.8,901.1 L645.8,900.8 L646.8,900.6 L647.8,900.3 L648.8,900.0 L649.8,899.7 L650.7,899.4 L651.7,899.2 L652.6,898.9 L653.5,898.6 L654.4,898.3 L655.3,898.0 L656.2,897.7 L657.0,897.4 L657.9,897.1 L658.7,896.8 L659.6,896.4 L660.4,896.1 L661.2,895.8 L662.0,895.5 L662.8,895.2 L663.5,894.8 L664.3,894.5 L665.1,894.1 L665.8,893.8 L666.5,893.5 L667.3,893.1 L668.0,892.8 L668.7,892.4 L669.4,892.0 L670.1,891.7 L670.8,891.3 L671.4,890.9 L672.1,890.5 L672.8,890.1 L673.4,889.7 L674.1,889.3 L674.7,888.9 L675.3,888.4 L675.9,888.0 L676.5,887.6 L677.1,887.1 L677.7,886.6 L678.3,886.2 L678.8,885.7 L679.4,885.2 L679.9,884.6 L680.5,884.1 L681.0,883.6 L681.5,883.0 L682.0,882.4 L682.5,881.8 L683.0,881.2 L683.4,880.6 L683.9,880.0 L684.3,879.3 L684.8,878.7 L685.2,878.0 L685.6,877.3 L686.0,876.6 L686.3,875.8 L686.7,875.1 L687.0,874.3 L687.3,873.5 L687.7,872.7 L688.0,871.9 L688.3,871.1 L688.5,870.2 L688.8,869.3 L689.0,868.4 L689.3,867.4 L689.5,866.5 L689.7,865.5 L689.9,864.4 L690.1,863.4 L690.3,862.3 L690.4,861.2 L690.6,860.0 L690.7,858.8 L690.8,857.5 L691.0,856.2 L691.1,854.8 L691.1,853.3 L691.2,851.7 L691.3,850.1 L691.4,848.2 L691.4,846.2 L691.5,843.9 L691.5,841.3 L691.5,837.8 L691.5,830.0 L691.5,825.0 L691.5,802.9 L691.5,780.9 L691.5,758.8 L691.5,736.7 L691.5,714.7 L691.5,692.6 L691.5,670.5 L691.5,648.4 L691.5,626.4 L691.5,604.3 L691.5,582.2 L691.5,560.2 L691.5,538.1 L691.5,516.0 L691.5,494.0 L691.5,471.9 L691.5,449.8 L691.5,427.8 L691.5,405.7 L691.5,383.6 L691.5,361.6 L691.5,339.5 L691.5,317.4 L691.5,295.3 L691.5,273.3 L691.5,251.2 L691.5,229.1 L691.5,207.1 L691.5,185.0 L691.5,180.0 L691.5,173.4 L691.5,170.1 L691.4,167.6 L691.4,165.4 L691.4,163.4 L691.3,161.6 L691.2,159.9 L691.1,158.3 L691.0,156.8 L690.9,155.4 L690.8,154.0 L690.6,152.7 L690.5,151.4 L690.3,150.2 L690.2,149.1 L690.0,147.9 L689.8,146.8 L689.6,145.7 L689.4,144.7 L689.1,143.7 L688.9,142.7 L688.6,141.7 L688.4,140.7 L688.1,139.8 L687.8,138.9 L687.5,138.0 L687.2,137.1 L686.9,136.3 L686.5,135.4 L686.2,134.6 L685.8,133.8 L685.5,133.0 L685.1,132.2 L684.7,131.4 L684.3,130.6 L683.9,129.9 L683.4,129.1 L683.0,128.4 L682.5,127.7 L682.1,127.0 L681.6,126.3 L681.1,125.6 L680.6,124.9 L680.1,124.3 L679.6,123.6 L679.0,123.0 L678.5,122.3 L677.9,121.7 L677.4,121.1 L676.8,120.5 L676.2,119.8 L675.6,119.2 L675.0,118.7 L674.3,118.1 L673.7,117.5 L673.0,116.9 L672.4,116.4 L671.7,115.8 L671.0,115.3 L670.3,114.7 L669.5,114.2 L668.8,113.6 L668.1,113.1 L667.3,112.6 L666.5,112.1 L665.8,111.6 L665.0,111.1 L664.1,110.6 L663.3,110.1 L662.5,109.6 L661.6,109.2 L660.8,108.7 L659.9,108.2 L659.0,107.8 L658.1,107.3 L657.2,106.9 L656.3,106.5 L655.3,106.0 L654.3,105.6 L653.4,105.2 L652.4,104.8 L651.4,104.4 L650.4,104.0 L649.3,103.6 L648.3,103.2 L647.2,102.8 L646.2,102.4 L645.1,102.0 L644.0,101.7 L642.8,101.3 L641.7,100.9 L640.6,100.6 L639.4,100.2 L638.2,99.9 L637.0,99.5 L635.8,99.2 L634.6,98.9 L633.3,98.6 L632.1,98.2 L630.8,97.9 L629.5,97.6 L628.2,97.3 L626.8,97.0 L625.5,96.7 L624.1,96.5 L622.7,96.2 L621.3,95.9 L619.9,95.6 L618.5,95.4 L617.0,95.1 L615.5,94.9 L614.0,94.6 L612.5,94.4 L610.9,94.1 L609.4,93.9 L607.8,93.7 L606.2,93.5 L604.6,93.3 L602.9,93.0 L601.2,92.8 L599.5,92.6 L597.8,92.4 L596.0,92.3 L594.2,92.1 L592.4,91.9 L590.6,91.7 L588.7,91.6 L586.8,91.4 L584.9,91.2 L582.9,91.1 L580.9,90.9 L578.9,90.8 L576.8,90.7 L574.7,90.5 L572.6,90.4 L570.4,90.3 L568.1,90.2 L565.8,90.0 L563.5,89.9 L561.1,89.8 L558.6,89.7 L556.1,89.6 L553.5,89.6 L550.8,89.5 L548.1,89.4 L545.3,89.3 L542.3,89.3 L539.3,89.2 L536.1,89.2 L532.8,89.1 L529.3,89.1 L525.7,89.0 L521.8,89.0 L517.6,89.0 L513.0,88.9 L507.9,88.9 L501.9,88.9 L494.5,88.9 L479.2,88.9Z" fill="url(#rimg)"/>
<path d="M479.3,91.5 L464.0,91.5 L456.6,91.5 L450.6,91.5 L445.5,91.5 L441.0,91.6 L436.8,91.6 L432.9,91.6 L429.2,91.7 L425.7,91.7 L422.4,91.8 L419.3,91.8 L416.2,91.9 L413.3,91.9 L410.5,92.0 L407.7,92.1 L405.1,92.2 L402.5,92.2 L400.0,92.3 L397.5,92.4 L395.1,92.5 L392.8,92.6 L390.5,92.7 L388.3,92.9 L386.1,93.0 L384.0,93.1 L381.8,93.2 L379.8,93.4 L377.8,93.5 L375.8,93.7 L373.8,93.8 L371.9,94.0 L370.0,94.1 L368.1,94.3 L366.3,94.5 L364.5,94.7 L362.7,94.8 L361.0,95.0 L359.3,95.2 L357.6,95.4 L355.9,95.6 L354.3,95.8 L352.7,96.0 L351.1,96.3 L349.5,96.5 L347.9,96.7 L346.4,96.9 L344.9,97.2 L343.4,97.4 L341.9,97.7 L340.5,97.9 L339.1,98.2 L337.7,98.4 L336.3,98.7 L334.9,99.0 L333.6,99.3 L332.2,99.6 L330.9,99.8 L329.6,100.1 L328.3,100.4 L327.1,100.7 L325.8,101.0 L324.6,101.4 L323.4,101.7 L322.2,102.0 L321.0,102.3 L319.8,102.7 L318.7,103.0 L317.6,103.4 L316.4,103.7 L315.3,104.1 L314.3,104.4 L313.2,104.8 L312.1,105.2 L311.1,105.5 L310.1,105.9 L309.1,106.3 L308.1,106.7 L307.1,107.1 L306.1,107.5 L305.2,107.9 L304.2,108.3 L303.3,108.7 L302.4,109.1 L301.5,109.6 L300.6,110.0 L299.7,110.4 L298.9,110.9 L298.1,111.3 L297.2,111.8 L296.4,112.2 L295.6,112.7 L294.8,113.2 L294.1,113.6 L293.3,114.1 L292.5,114.6 L291.8,115.1 L291.1,115.6 L290.4,116.1 L289.7,116.6 L289.0,117.1 L288.3,117.6 L287.7,118.2 L287.0,118.7 L286.4,119.2 L285.8,119.8 L285.1,120.3 L284.5,120.9 L284.0,121.5 L283.4,122.0 L282.8,122.6 L282.3,123.2 L281.7,123.8 L281.2,124.4 L280.7,125.0 L280.2,125.6 L279.7,126.3 L279.2,126.9 L278.7,127.5 L278.3,128.2 L277.8,128.9 L277.4,129.5 L276.9,130.2 L276.5,130.9 L276.1,131.6 L275.7,132.4 L275.3,133.1 L275.0,133.8 L274.6,134.6 L274.2,135.4 L273.9,136.2 L273.6,137.0 L273.3,137.8 L272.9,138.7 L272.7,139.5 L272.4,140.4 L272.1,141.3 L271.8,142.2 L271.6,143.2 L271.3,144.1 L271.1,145.1 L270.9,146.1 L270.7,147.2 L270.5,148.2 L270.3,149.4 L270.2,150.5 L270.0,151.7 L269.8,152.9 L269.7,154.2 L269.6,155.5 L269.5,156.9 L269.4,158.4 L269.3,160.0 L269.2,161.6 L269.1,163.4 L269.1,165.4 L269.1,167.6 L269.0,170.2 L269.0,173.4 L269.0,180.0 L269.0,185.0 L269.0,207.1 L269.0,229.1 L269.0,251.2 L269.0,273.3 L269.0,295.3 L269.0,317.4 L269.0,339.5 L269.0,361.6 L269.0,383.6 L269.0,405.7 L269.0,427.8 L269.0,449.8 L269.0,471.9 L269.0,494.0 L269.0,516.0 L269.0,538.1 L269.0,560.2 L269.0,582.2 L269.0,604.3 L269.0,626.4 L269.0,648.4 L269.0,670.5 L269.0,692.6 L269.0,714.7 L269.0,736.7 L269.0,758.8 L269.0,780.9 L269.0,802.9 L269.0,825.0 L269.0,830.0 L269.0,837.8 L269.0,841.3 L269.0,843.9 L269.1,846.2 L269.1,848.2 L269.2,850.0 L269.3,851.6 L269.3,853.2 L269.4,854.6 L269.5,856.0 L269.7,857.3 L269.8,858.6 L269.9,859.8 L270.1,860.9 L270.2,862.0 L270.4,863.1 L270.6,864.1 L270.8,865.1 L271.0,866.1 L271.2,867.0 L271.4,867.9 L271.7,868.8 L271.9,869.6 L272.2,870.5 L272.5,871.3 L272.8,872.1 L273.1,872.9 L273.4,873.6 L273.7,874.3 L274.1,875.1 L274.4,875.7 L274.8,876.4 L275.2,877.1 L275.6,877.7 L276.0,878.3 L276.5,879.0 L276.9,879.5 L277.3,880.1 L277.8,880.7 L278.3,881.2 L278.8,881.8 L279.3,882.3 L279.8,882.8 L280.3,883.3 L280.8,883.7 L281.4,884.2 L281.9,884.7 L282.5,885.1 L283.1,885.5 L283.7,885.9 L284.2,886.3 L284.8,886.7 L285.4,887.1 L286.1,887.5 L286.7,887.9 L287.3,888.3 L287.9,888.6 L288.6,889.0 L289.2,889.3 L289.9,889.6 L290.6,890.0 L291.3,890.3 L291.9,890.6 L292.6,891.0 L293.4,891.3 L294.1,891.6 L294.8,891.9 L295.5,892.2 L296.3,892.5 L297.0,892.8 L297.8,893.1 L298.6,893.4 L299.3,893.7 L300.1,894.0 L300.9,894.3 L301.8,894.6 L302.6,894.9 L303.4,895.1 L304.3,895.4 L305.2,895.7 L306.0,896.0 L306.9,896.2 L307.8,896.5 L308.8,896.8 L309.7,897.1 L310.6,897.3 L311.6,897.6 L312.6,897.9 L313.5,898.1 L314.5,898.4 L315.6,898.6 L316.6,898.9 L317.6,899.1 L318.7,899.4 L319.8,899.6 L320.9,899.9 L322.0,900.1 L323.1,900.4 L324.3,900.6 L325.4,900.8 L326.6,901.0 L327.8,901.3 L329.0,901.5 L330.2,901.7 L331.5,901.9 L332.8,902.2 L334.0,902.4 L335.4,902.6 L336.7,902.8 L338.0,903.0 L339.4,903.2 L340.8,903.4 L342.2,903.6 L343.6,903.8 L345.1,903.9 L346.6,904.1 L348.1,904.3 L349.6,904.5 L351.1,904.6 L352.7,904.8 L354.3,905.0 L356.0,905.1 L357.6,905.3 L359.3,905.4 L361.0,905.6 L362.8,905.7 L364.5,905.9 L366.4,906.0 L368.2,906.1 L370.1,906.2 L372.0,906.4 L374.0,906.5 L376.0,906.6 L378.0,906.7 L380.1,906.8 L382.2,906.9 L384.4,907.0 L386.6,907.1 L388.9,907.2 L391.3,907.3 L393.7,907.4 L396.2,907.5 L398.8,907.5 L401.4,907.6 L404.2,907.7 L407.0,907.7 L410.0,907.8 L413.0,907.8 L416.2,907.9 L419.6,907.9 L423.2,908.0 L427.0,908.0 L431.0,908.0 L435.4,908.0 L440.3,908.1 L445.7,908.1 L452.2,908.1 L460.4,908.1 L479.3,908.1 L498.1,908.1 L506.3,908.1 L512.8,908.1 L518.2,908.1 L523.1,908.0 L527.5,908.0 L531.5,908.0 L535.3,908.0 L538.9,907.9 L542.3,907.9 L545.5,907.8 L548.5,907.8 L551.5,907.7 L554.3,907.7 L557.1,907.6 L559.7,907.5 L562.3,907.5 L564.8,907.4 L567.2,907.3 L569.6,907.2 L571.9,907.1 L574.1,907.0 L576.3,906.9 L578.4,906.8 L580.5,906.7 L582.5,906.6 L584.5,906.5 L586.5,906.4 L588.4,906.2 L590.3,906.1 L592.1,906.0 L594.0,905.9 L595.7,905.7 L597.5,905.6 L599.2,905.4 L600.9,905.3 L602.5,905.1 L604.2,905.0 L605.8,904.8 L607.4,904.6 L608.9,904.5 L610.4,904.3 L611.9,904.1 L613.4,903.9 L614.9,903.8 L616.3,903.6 L617.7,903.4 L619.1,903.2 L620.5,903.0 L621.8,902.8 L623.1,902.6 L624.5,902.4 L625.7,902.2 L627.0,901.9 L628.3,901.7 L629.5,901.5 L630.7,901.3 L631.9,901.0 L633.1,900.8 L634.2,900.6 L635.4,900.4 L636.5,900.1 L637.6,899.9 L638.7,899.6 L639.8,899.4 L640.9,899.1 L641.9,898.9 L642.9,898.6 L644.0,898.4 L645.0,898.1 L645.9,897.9 L646.9,897.6 L647.9,897.3 L648.8,897.1 L649.7,896.8 L650.7,896.5 L651.6,896.2 L652.5,896.0 L653.3,895.7 L654.2,895.4 L655.1,895.1 L655.9,894.9 L656.7,894.6 L657.6,894.3 L658.4,894.0 L659.2,893.7 L659.9,893.4 L660.7,893.1 L661.5,892.8 L662.2,892.5 L663.0,892.2 L663.7,891.9 L664.4,891.6 L665.1,891.3 L665.9,891.0 L666.6,890.6 L667.2,890.3 L667.9,890.0 L668.6,889.6 L669.3,889.3 L669.9,889.0 L670.6,888.6 L671.2,888.3 L671.8,887.9 L672.4,887.5 L673.1,887.1 L673.7,886.7 L674.3,886.3 L674.8,885.9 L675.4,885.5 L676.0,885.1 L676.6,884.7 L677.1,884.2 L677.7,883.7 L678.2,883.3 L678.7,882.8 L679.2,882.3 L679.7,881.8 L680.2,881.2 L680.7,880.7 L681.2,880.1 L681.6,879.5 L682.0,879.0 L682.5,878.3 L682.9,877.7 L683.3,877.1 L683.7,876.4 L684.1,875.7 L684.4,875.1 L684.8,874.3 L685.1,873.6 L685.4,872.9 L685.7,872.1 L686.0,871.3 L686.3,870.5 L686.6,869.6 L686.8,868.8 L687.1,867.9 L687.3,867.0 L687.5,866.1 L687.7,865.1 L687.9,864.1 L688.1,863.1 L688.3,862.0 L688.4,860.9 L688.6,859.8 L688.7,858.6 L688.8,857.3 L689.0,856.0 L689.1,854.6 L689.2,853.2 L689.2,851.6 L689.3,850.0 L689.4,848.2 L689.4,846.2 L689.5,843.9 L689.5,841.3 L689.5,837.8 L689.5,830.0 L689.5,825.0 L689.5,802.9 L689.5,780.9 L689.5,758.8 L689.5,736.7 L689.5,714.7 L689.5,692.6 L689.5,670.5 L689.5,648.4 L689.5,626.4 L689.5,604.3 L689.5,582.2 L689.5,560.2 L689.5,538.1 L689.5,516.0 L689.5,494.0 L689.5,471.9 L689.5,449.8 L689.5,427.8 L689.5,405.7 L689.5,383.6 L689.5,361.6 L689.5,339.5 L689.5,317.4 L689.5,295.3 L689.5,273.3 L689.5,251.2 L689.5,229.1 L689.5,207.1 L689.5,185.0 L689.5,180.0 L689.5,173.4 L689.5,170.2 L689.4,167.6 L689.4,165.4 L689.4,163.4 L689.3,161.6 L689.2,160.0 L689.1,158.4 L689.0,156.9 L688.9,155.5 L688.8,154.2 L688.7,152.9 L688.5,151.7 L688.3,150.5 L688.2,149.4 L688.0,148.2 L687.8,147.2 L687.6,146.1 L687.4,145.1 L687.2,144.1 L686.9,143.2 L686.7,142.2 L686.4,141.3 L686.1,140.4 L685.8,139.5 L685.6,138.7 L685.2,137.8 L684.9,137.0 L684.6,136.2 L684.3,135.4 L683.9,134.6 L683.5,133.8 L683.2,133.1 L682.8,132.4 L682.4,131.6 L682.0,130.9 L681.6,130.2 L681.1,129.5 L680.7,128.9 L680.2,128.2 L679.8,127.5 L679.3,126.9 L678.8,126.3 L678.3,125.6 L677.8,125.0 L677.3,124.4 L676.8,123.8 L676.2,123.2 L675.7,122.6 L675.1,122.0 L674.5,121.5 L674.0,120.9 L673.4,120.3 L672.7,119.8 L672.1,119.2 L671.5,118.7 L670.8,118.2 L670.2,117.6 L669.5,117.1 L668.8,116.6 L668.1,116.1 L667.4,115.6 L666.7,115.1 L666.0,114.6 L665.2,114.1 L664.4,113.6 L663.7,113.2 L662.9,112.7 L662.1,112.2 L661.3,111.8 L660.4,111.3 L659.6,110.9 L658.8,110.4 L657.9,110.0 L657.0,109.6 L656.1,109.1 L655.2,108.7 L654.3,108.3 L653.3,107.9 L652.4,107.5 L651.4,107.1 L650.4,106.7 L649.4,106.3 L648.4,105.9 L647.4,105.5 L646.4,105.2 L645.3,104.8 L644.2,104.4 L643.2,104.1 L642.1,103.7 L640.9,103.4 L639.8,103.0 L638.7,102.7 L637.5,102.3 L636.3,102.0 L635.1,101.7 L633.9,101.4 L632.7,101.0 L631.4,100.7 L630.2,100.4 L628.9,100.1 L627.6,99.8 L626.3,99.6 L624.9,99.3 L623.6,99.0 L622.2,98.7 L620.8,98.4 L619.4,98.2 L618.0,97.9 L616.6,97.7 L615.1,97.4 L613.6,97.2 L612.1,96.9 L610.6,96.7 L609.0,96.5 L607.4,96.3 L605.8,96.0 L604.2,95.8 L602.6,95.6 L600.9,95.4 L599.2,95.2 L597.5,95.0 L595.8,94.8 L594.0,94.7 L592.2,94.5 L590.4,94.3 L588.5,94.1 L586.6,94.0 L584.7,93.8 L582.7,93.7 L580.7,93.5 L578.7,93.4 L576.7,93.2 L574.5,93.1 L572.4,93.0 L570.2,92.9 L568.0,92.7 L565.7,92.6 L563.4,92.5 L561.0,92.4 L558.5,92.3 L556.0,92.2 L553.4,92.2 L550.8,92.1 L548.0,92.0 L545.2,91.9 L542.3,91.9 L539.2,91.8 L536.1,91.8 L532.8,91.7 L529.3,91.7 L525.6,91.6 L521.7,91.6 L517.5,91.6 L513.0,91.5 L507.9,91.5 L501.9,91.5 L494.5,91.5 L479.2,91.5Z" fill="#2a2a2a"/>
<path d="M479.3,96.8 L464.0,96.8 L456.6,96.8 L450.7,96.8 L445.6,96.8 L441.0,96.9 L436.8,96.9 L432.9,96.9 L429.3,97.0 L425.8,97.0 L422.5,97.1 L419.4,97.1 L416.3,97.2 L413.4,97.2 L410.6,97.3 L407.9,97.4 L405.2,97.5 L402.7,97.5 L400.2,97.6 L397.7,97.7 L395.4,97.8 L393.1,97.9 L390.8,98.0 L388.6,98.1 L386.4,98.3 L384.3,98.4 L382.2,98.5 L380.1,98.6 L378.1,98.8 L376.2,98.9 L374.2,99.1 L372.3,99.2 L370.5,99.4 L368.6,99.5 L366.8,99.7 L365.0,99.9 L363.3,100.0 L361.6,100.2 L359.9,100.4 L358.2,100.6 L356.6,100.8 L354.9,101.0 L353.4,101.2 L351.8,101.4 L350.2,101.6 L348.7,101.8 L347.2,102.0 L345.7,102.2 L344.3,102.5 L342.8,102.7 L341.4,102.9 L340.0,103.2 L338.6,103.4 L337.3,103.6 L335.9,103.9 L334.6,104.1 L333.3,104.4 L332.0,104.7 L330.7,104.9 L329.5,105.2 L328.2,105.5 L327.0,105.8 L325.8,106.0 L324.6,106.3 L323.5,106.6 L322.3,106.9 L321.2,107.2 L320.1,107.5 L318.9,107.8 L317.9,108.1 L316.8,108.4 L315.7,108.7 L314.7,109.0 L313.7,109.4 L312.6,109.7 L311.6,110.0 L310.6,110.3 L309.7,110.7 L308.7,111.0 L307.8,111.3 L306.8,111.7 L305.9,112.0 L305.0,112.4 L304.1,112.7 L303.2,113.1 L302.4,113.5 L301.5,113.8 L300.7,114.2 L299.8,114.5 L299.0,114.9 L298.2,115.3 L297.4,115.7 L296.6,116.1 L295.8,116.5 L295.1,116.8 L294.3,117.2 L293.6,117.6 L292.9,118.1 L292.1,118.5 L291.4,118.9 L290.7,119.3 L290.0,119.7 L289.4,120.2 L288.7,120.6 L288.0,121.1 L287.4,121.5 L286.7,122.0 L286.1,122.5 L285.5,122.9 L284.9,123.4 L284.3,123.9 L283.7,124.4 L283.1,125.0 L282.5,125.5 L282.0,126.0 L281.4,126.6 L280.9,127.2 L280.4,127.7 L279.9,128.3 L279.4,128.9 L278.9,129.5 L278.4,130.2 L277.9,130.8 L277.5,131.5 L277.0,132.1 L276.6,132.8 L276.2,133.5 L275.8,134.2 L275.4,135.0 L275.0,135.7 L274.7,136.5 L274.3,137.3 L274.0,138.1 L273.7,138.9 L273.4,139.8 L273.1,140.6 L272.8,141.5 L272.5,142.4 L272.3,143.3 L272.0,144.3 L271.8,145.3 L271.6,146.3 L271.4,147.3 L271.2,148.4 L271.0,149.5 L270.8,150.6 L270.7,151.8 L270.5,153.0 L270.4,154.3 L270.3,155.6 L270.2,157.0 L270.1,158.5 L270.0,160.0 L269.9,161.7 L269.8,163.5 L269.8,165.4 L269.8,167.6 L269.7,170.2 L269.7,173.4 L269.7,180.0 L269.7,185.0 L269.7,207.1 L269.7,229.1 L269.7,251.2 L269.7,273.3 L269.7,295.3 L269.7,317.4 L269.7,339.5 L269.7,361.6 L269.7,383.6 L269.7,405.7 L269.7,427.8 L269.7,449.8 L269.7,471.9 L269.7,494.0 L269.7,516.0 L269.7,538.1 L269.7,560.2 L269.7,582.2 L269.7,604.3 L269.7,626.4 L269.7,648.4 L269.7,670.5 L269.7,692.6 L269.7,714.7 L269.7,736.7 L269.7,758.8 L269.7,780.9 L269.7,802.9 L269.7,825.0 L269.7,830.0 L269.7,837.8 L269.7,841.3 L269.7,843.9 L269.8,846.2 L269.8,848.2 L269.9,850.0 L270.0,851.6 L270.0,853.2 L270.1,854.6 L270.2,856.0 L270.4,857.3 L270.5,858.5 L270.6,859.7 L270.8,860.8 L270.9,861.9 L271.1,863.0 L271.3,864.0 L271.5,865.0 L271.7,865.9 L271.9,866.8 L272.1,867.7 L272.3,868.6 L272.6,869.5 L272.9,870.3 L273.1,871.1 L273.4,871.9 L273.7,872.6 L274.0,873.4 L274.4,874.1 L274.7,874.8 L275.1,875.5 L275.5,876.1 L275.8,876.8 L276.2,877.4 L276.6,878.0 L277.1,878.6 L277.5,879.2 L277.9,879.8 L278.4,880.3 L278.9,880.8 L279.4,881.4 L279.9,881.9 L280.4,882.4 L280.9,882.8 L281.4,883.3 L281.9,883.8 L282.5,884.2 L283.0,884.6 L283.6,885.0 L284.2,885.5 L284.7,885.9 L285.3,886.2 L285.9,886.6 L286.5,887.0 L287.1,887.4 L287.8,887.7 L288.4,888.1 L289.0,888.4 L289.7,888.8 L290.3,889.1 L291.0,889.4 L291.7,889.7 L292.3,890.1 L293.0,890.4 L293.7,890.7 L294.4,891.0 L295.2,891.3 L295.9,891.6 L296.6,891.9 L297.4,892.2 L298.1,892.5 L298.9,892.8 L299.7,893.1 L300.4,893.4 L301.2,893.6 L302.1,893.9 L302.9,894.2 L303.7,894.5 L304.6,894.8 L305.4,895.0 L306.3,895.3 L307.2,895.6 L308.1,895.9 L309.0,896.1 L309.9,896.4 L310.9,896.7 L311.8,896.9 L312.8,897.2 L313.8,897.4 L314.8,897.7 L315.8,898.0 L316.8,898.2 L317.8,898.5 L318.9,898.7 L320.0,899.0 L321.1,899.2 L322.2,899.4 L323.3,899.7 L324.4,899.9 L325.6,900.1 L326.7,900.4 L327.9,900.6 L329.1,900.8 L330.4,901.0 L331.6,901.3 L332.9,901.5 L334.2,901.7 L335.5,901.9 L336.8,902.1 L338.1,902.3 L339.5,902.5 L340.9,902.7 L342.3,902.9 L343.7,903.1 L345.2,903.2 L346.7,903.4 L348.2,903.6 L349.7,903.8 L351.2,903.9 L352.8,904.1 L354.4,904.3 L356.0,904.4 L357.7,904.6 L359.4,904.7 L361.1,904.9 L362.8,905.0 L364.6,905.2 L366.4,905.3 L368.3,905.4 L370.1,905.6 L372.0,905.7 L374.0,905.8 L376.0,905.9 L378.0,906.0 L380.1,906.1 L382.3,906.2 L384.4,906.3 L386.7,906.4 L389.0,906.5 L391.3,906.6 L393.7,906.7 L396.2,906.8 L398.8,906.8 L401.4,906.9 L404.2,907.0 L407.0,907.0 L410.0,907.1 L413.0,907.1 L416.3,907.2 L419.6,907.2 L423.2,907.3 L427.0,907.3 L431.0,907.3 L435.4,907.3 L440.3,907.4 L445.7,907.4 L452.2,907.4 L460.4,907.4 L479.3,907.4 L498.1,907.4 L506.3,907.4 L512.8,907.4 L518.2,907.4 L523.1,907.3 L527.5,907.3 L531.5,907.3 L535.3,907.3 L538.9,907.2 L542.2,907.2 L545.5,907.1 L548.5,907.1 L551.5,907.0 L554.3,907.0 L557.1,906.9 L559.7,906.8 L562.3,906.8 L564.8,906.7 L567.2,906.6 L569.5,906.5 L571.8,906.4 L574.1,906.3 L576.2,906.2 L578.4,906.1 L580.5,906.0 L582.5,905.9 L584.5,905.8 L586.5,905.7 L588.4,905.6 L590.2,905.4 L592.1,905.3 L593.9,905.2 L595.7,905.0 L597.4,904.9 L599.1,904.7 L600.8,904.6 L602.5,904.4 L604.1,904.3 L605.7,904.1 L607.3,903.9 L608.8,903.8 L610.3,903.6 L611.8,903.4 L613.3,903.2 L614.8,903.1 L616.2,902.9 L617.6,902.7 L619.0,902.5 L620.4,902.3 L621.7,902.1 L623.0,901.9 L624.3,901.7 L625.6,901.5 L626.9,901.3 L628.1,901.0 L629.4,900.8 L630.6,900.6 L631.8,900.4 L632.9,900.1 L634.1,899.9 L635.2,899.7 L636.3,899.4 L637.4,899.2 L638.5,899.0 L639.6,898.7 L640.7,898.5 L641.7,898.2 L642.7,898.0 L643.7,897.7 L644.7,897.4 L645.7,897.2 L646.7,896.9 L647.6,896.7 L648.6,896.4 L649.5,896.1 L650.4,895.9 L651.3,895.6 L652.2,895.3 L653.1,895.0 L653.9,894.8 L654.8,894.5 L655.6,894.2 L656.4,893.9 L657.3,893.6 L658.1,893.4 L658.8,893.1 L659.6,892.8 L660.4,892.5 L661.1,892.2 L661.9,891.9 L662.6,891.6 L663.3,891.3 L664.1,891.0 L664.8,890.7 L665.5,890.4 L666.2,890.1 L666.8,889.7 L667.5,889.4 L668.2,889.1 L668.8,888.8 L669.5,888.4 L670.1,888.1 L670.7,887.7 L671.4,887.4 L672.0,887.0 L672.6,886.6 L673.2,886.2 L673.8,885.9 L674.3,885.5 L674.9,885.0 L675.5,884.6 L676.0,884.2 L676.6,883.8 L677.1,883.3 L677.6,882.8 L678.1,882.4 L678.6,881.9 L679.1,881.4 L679.6,880.8 L680.1,880.3 L680.6,879.8 L681.0,879.2 L681.4,878.6 L681.9,878.0 L682.3,877.4 L682.7,876.8 L683.0,876.1 L683.4,875.5 L683.8,874.8 L684.1,874.1 L684.5,873.4 L684.8,872.6 L685.1,871.9 L685.4,871.1 L685.6,870.3 L685.9,869.5 L686.2,868.6 L686.4,867.7 L686.6,866.8 L686.8,865.9 L687.0,865.0 L687.2,864.0 L687.4,863.0 L687.6,861.9 L687.7,860.8 L687.9,859.7 L688.0,858.5 L688.1,857.3 L688.3,856.0 L688.4,854.6 L688.5,853.2 L688.5,851.6 L688.6,850.0 L688.7,848.2 L688.7,846.2 L688.8,843.9 L688.8,841.3 L688.8,837.8 L688.8,830.0 L688.8,825.0 L688.8,802.9 L688.8,780.9 L688.8,758.8 L688.8,736.7 L688.8,714.7 L688.8,692.6 L688.8,670.5 L688.8,648.4 L688.8,626.4 L688.8,604.3 L688.8,582.2 L688.8,560.2 L688.8,538.1 L688.8,516.0 L688.8,494.0 L688.8,471.9 L688.8,449.8 L688.8,427.8 L688.8,405.7 L688.8,383.6 L688.8,361.6 L688.8,339.5 L688.8,317.4 L688.8,295.3 L688.8,273.3 L688.8,251.2 L688.8,229.1 L688.8,207.1 L688.8,185.0 L688.8,180.0 L688.8,173.4 L688.8,170.2 L688.7,167.6 L688.7,165.4 L688.7,163.5 L688.6,161.7 L688.5,160.0 L688.4,158.5 L688.3,157.0 L688.2,155.6 L688.1,154.3 L688.0,153.0 L687.8,151.8 L687.7,150.6 L687.5,149.5 L687.3,148.4 L687.1,147.3 L686.9,146.3 L686.7,145.3 L686.5,144.3 L686.2,143.3 L686.0,142.4 L685.7,141.5 L685.4,140.6 L685.1,139.8 L684.8,138.9 L684.5,138.1 L684.2,137.3 L683.8,136.5 L683.5,135.7 L683.1,135.0 L682.7,134.2 L682.3,133.5 L681.9,132.8 L681.5,132.1 L681.0,131.5 L680.6,130.8 L680.1,130.2 L679.6,129.5 L679.1,128.9 L678.6,128.3 L678.1,127.7 L677.6,127.2 L677.1,126.6 L676.5,126.0 L676.0,125.5 L675.4,125.0 L674.8,124.4 L674.2,123.9 L673.6,123.4 L673.0,122.9 L672.4,122.5 L671.8,122.0 L671.1,121.5 L670.5,121.1 L669.8,120.6 L669.1,120.2 L668.5,119.7 L667.8,119.3 L667.1,118.9 L666.4,118.5 L665.6,118.1 L664.9,117.6 L664.2,117.2 L663.4,116.8 L662.7,116.5 L661.9,116.1 L661.1,115.7 L660.3,115.3 L659.5,114.9 L658.7,114.5 L657.8,114.2 L657.0,113.8 L656.1,113.5 L655.3,113.1 L654.4,112.7 L653.5,112.4 L652.6,112.0 L651.7,111.7 L650.7,111.3 L649.8,111.0 L648.8,110.7 L647.9,110.3 L646.9,110.0 L645.9,109.7 L644.8,109.4 L643.8,109.0 L642.8,108.7 L641.7,108.4 L640.6,108.1 L639.6,107.8 L638.4,107.5 L637.3,107.2 L636.2,106.9 L635.0,106.6 L633.9,106.3 L632.7,106.0 L631.5,105.8 L630.3,105.5 L629.0,105.2 L627.8,104.9 L626.5,104.7 L625.2,104.4 L623.9,104.1 L622.6,103.9 L621.2,103.6 L619.9,103.4 L618.5,103.2 L617.1,102.9 L615.7,102.7 L614.2,102.5 L612.8,102.2 L611.3,102.0 L609.8,101.8 L608.3,101.6 L606.7,101.4 L605.1,101.2 L603.6,101.0 L601.9,100.8 L600.3,100.6 L598.6,100.4 L596.9,100.2 L595.2,100.0 L593.5,99.9 L591.7,99.7 L589.9,99.5 L588.0,99.4 L586.2,99.2 L584.3,99.1 L582.3,98.9 L580.4,98.8 L578.4,98.6 L576.3,98.5 L574.2,98.4 L572.1,98.3 L569.9,98.1 L567.7,98.0 L565.4,97.9 L563.1,97.8 L560.8,97.7 L558.3,97.6 L555.8,97.5 L553.3,97.5 L550.6,97.4 L547.9,97.3 L545.1,97.2 L542.2,97.2 L539.1,97.1 L536.0,97.1 L532.7,97.0 L529.2,97.0 L525.6,96.9 L521.7,96.9 L517.5,96.9 L512.9,96.8 L507.8,96.8 L501.9,96.8 L494.5,96.8 L479.2,96.8Z" fill="#2a2a2a"/>
<path d="M479.3,96.8 L464.0,96.8 L456.6,96.8 L450.7,96.8 L445.6,96.8 L441.0,96.9 L436.8,96.9 L432.9,96.9 L429.3,97.0 L425.8,97.0 L422.5,97.1 L419.4,97.1 L416.3,97.2 L413.4,97.2 L410.6,97.3 L407.9,97.4 L405.2,97.5 L402.7,97.5 L400.2,97.6 L397.7,97.7 L395.4,97.8 L393.1,97.9 L390.8,98.0 L388.6,98.1 L386.4,98.3 L384.3,98.4 L382.2,98.5 L380.1,98.6 L378.1,98.8 L376.2,98.9 L374.2,99.1 L372.3,99.2 L370.5,99.4 L368.6,99.5 L366.8,99.7 L365.0,99.9 L363.3,100.0 L361.6,100.2 L359.9,100.4 L358.2,100.6 L356.6,100.8 L354.9,101.0 L353.4,101.2 L351.8,101.4 L350.2,101.6 L348.7,101.8 L347.2,102.0 L345.7,102.2 L344.3,102.5 L342.8,102.7 L341.4,102.9 L340.0,103.2 L338.6,103.4 L337.3,103.6 L335.9,103.9 L334.6,104.1 L333.3,104.4 L332.0,104.7 L330.7,104.9 L329.5,105.2 L328.2,105.5 L327.0,105.8 L325.8,106.0 L324.6,106.3 L323.5,106.6 L322.3,106.9 L321.2,107.2 L320.1,107.5 L318.9,107.8 L317.9,108.1 L316.8,108.4 L315.7,108.7 L314.7,109.0 L313.7,109.4 L312.6,109.7 L311.6,110.0 L310.6,110.3 L309.7,110.7 L308.7,111.0 L307.8,111.3 L306.8,111.7 L305.9,112.0 L305.0,112.4 L304.1,112.7 L303.2,113.1 L302.4,113.5 L301.5,113.8 L300.7,114.2 L299.8,114.5 L299.0,114.9 L298.2,115.3 L297.4,115.7 L296.6,116.1 L295.8,116.5 L295.1,116.8 L294.3,117.2 L293.6,117.6 L292.9,118.1 L292.1,118.5 L291.4,118.9 L290.7,119.3 L290.0,119.7 L289.4,120.2 L288.7,120.6 L288.0,121.1 L287.4,121.5 L286.7,122.0 L286.1,122.5 L285.5,122.9 L284.9,123.4 L284.3,123.9 L283.7,124.4 L283.1,125.0 L282.5,125.5 L282.0,126.0 L281.4,126.6 L280.9,127.2 L280.4,127.7 L279.9,128.3 L279.4,128.9 L278.9,129.5 L278.4,130.2 L277.9,130.8 L277.5,131.5 L277.0,132.1 L276.6,132.8 L276.2,133.5 L275.8,134.2 L275.4,135.0 L275.0,135.7 L274.7,136.5 L274.3,137.3 L274.0,138.1 L273.7,138.9 L273.4,139.8 L273.1,140.6 L272.8,141.5 L272.5,142.4 L272.3,143.3 L272.0,144.3 L271.8,145.3 L271.6,146.3 L271.4,147.3 L271.2,148.4 L271.0,149.5 L270.8,150.6 L270.7,151.8 L270.5,153.0 L270.4,154.3 L270.3,155.6 L270.2,157.0 L270.1,158.5 L270.0,160.0 L269.9,161.7 L269.8,163.5 L269.8,165.4 L269.8,167.6 L269.7,170.2 L269.7,173.4 L269.7,180.0 L269.7,185.0 L269.7,207.1 L269.7,229.1 L269.7,251.2 L269.7,273.3 L269.7,295.3 L269.7,317.4 L269.7,339.5 L269.7,361.6 L269.7,383.6 L269.7,405.7 L269.7,427.8 L269.7,449.8 L269.7,471.9 L269.7,494.0 L269.7,516.0 L269.7,538.1 L269.7,560.2 L269.7,582.2 L269.7,604.3 L269.7,626.4 L269.7,648.4 L269.7,670.5 L269.7,692.6 L269.7,714.7 L269.7,736.7 L269.7,758.8 L269.7,780.9 L269.7,802.9 L269.7,825.0 L269.7,830.0 L269.7,837.8 L269.7,841.3 L269.7,843.9 L269.8,846.2 L269.8,848.2 L269.9,850.0 L270.0,851.6 L270.0,853.2 L270.1,854.6 L270.2,856.0 L270.4,857.3 L270.5,858.5 L270.6,859.7 L270.8,860.8 L270.9,861.9 L271.1,863.0 L271.3,864.0 L271.5,865.0 L271.7,865.9 L271.9,866.8 L272.1,867.7 L272.3,868.6 L272.6,869.5 L272.9,870.3 L273.1,871.1 L273.4,871.9 L273.7,872.6 L274.0,873.4 L274.4,874.1 L274.7,874.8 L275.1,875.5 L275.5,876.1 L275.8,876.8 L276.2,877.4 L276.6,878.0 L277.1,878.6 L277.5,879.2 L277.9,879.8 L278.4,880.3 L278.9,880.8 L279.4,881.4 L279.9,881.9 L280.4,882.4 L280.9,882.8 L281.4,883.3 L281.9,883.8 L282.5,884.2 L283.0,884.6 L283.6,885.0 L284.2,885.5 L284.7,885.9 L285.3,886.2 L285.9,886.6 L286.5,887.0 L287.1,887.4 L287.8,887.7 L288.4,888.1 L289.0,888.4 L289.7,888.8 L290.3,889.1 L291.0,889.4 L291.7,889.7 L292.3,890.1 L293.0,890.4 L293.7,890.7 L294.4,891.0 L295.2,891.3 L295.9,891.6 L296.6,891.9 L297.4,892.2 L298.1,892.5 L298.9,892.8 L299.7,893.1 L300.4,893.4 L301.2,893.6 L302.1,893.9 L302.9,894.2 L303.7,894.5 L304.6,894.8 L305.4,895.0 L306.3,895.3 L307.2,895.6 L308.1,895.9 L309.0,896.1 L309.9,896.4 L310.9,896.7 L311.8,896.9 L312.8,897.2 L313.8,897.4 L314.8,897.7 L315.8,898.0 L316.8,898.2 L317.8,898.5 L318.9,898.7 L320.0,899.0 L321.1,899.2 L322.2,899.4 L323.3,899.7 L324.4,899.9 L325.6,900.1 L326.7,900.4 L327.9,900.6 L329.1,900.8 L330.4,901.0 L331.6,901.3 L332.9,901.5 L334.2,901.7 L335.5,901.9 L336.8,902.1 L338.1,902.3 L339.5,902.5 L340.9,902.7 L342.3,902.9 L343.7,903.1 L345.2,903.2 L346.7,903.4 L348.2,903.6 L349.7,903.8 L351.2,903.9 L352.8,904.1 L354.4,904.3 L356.0,904.4 L357.7,904.6 L359.4,904.7 L361.1,904.9 L362.8,905.0 L364.6,905.2 L366.4,905.3 L368.3,905.4 L370.1,905.6 L372.0,905.7 L374.0,905.8 L376.0,905.9 L378.0,906.0 L380.1,906.1 L382.3,906.2 L384.4,906.3 L386.7,906.4 L389.0,906.5 L391.3,906.6 L393.7,906.7 L396.2,906.8 L398.8,906.8 L401.4,906.9 L404.2,907.0 L407.0,907.0 L410.0,907.1 L413.0,907.1 L416.3,907.2 L419.6,907.2 L423.2,907.3 L427.0,907.3 L431.0,907.3 L435.4,907.3 L440.3,907.4 L445.7,907.4 L452.2,907.4 L460.4,907.4 L479.3,907.4 L498.1,907.4 L506.3,907.4 L512.8,907.4 L518.2,907.4 L523.1,907.3 L527.5,907.3 L531.5,907.3 L535.3,907.3 L538.9,907.2 L542.2,907.2 L545.5,907.1 L548.5,907.1 L551.5,907.0 L554.3,907.0 L557.1,906.9 L559.7,906.8 L562.3,906.8 L564.8,906.7 L567.2,906.6 L569.5,906.5 L571.8,906.4 L574.1,906.3 L576.2,906.2 L578.4,906.1 L580.5,906.0 L582.5,905.9 L584.5,905.8 L586.5,905.7 L588.4,905.6 L590.2,905.4 L592.1,905.3 L593.9,905.2 L595.7,905.0 L597.4,904.9 L599.1,904.7 L600.8,904.6 L602.5,904.4 L604.1,904.3 L605.7,904.1 L607.3,903.9 L608.8,903.8 L610.3,903.6 L611.8,903.4 L613.3,903.2 L614.8,903.1 L616.2,902.9 L617.6,902.7 L619.0,902.5 L620.4,902.3 L621.7,902.1 L623.0,901.9 L624.3,901.7 L625.6,901.5 L626.9,901.3 L628.1,901.0 L629.4,900.8 L630.6,900.6 L631.8,900.4 L632.9,900.1 L634.1,899.9 L635.2,899.7 L636.3,899.4 L637.4,899.2 L638.5,899.0 L639.6,898.7 L640.7,898.5 L641.7,898.2 L642.7,898.0 L643.7,897.7 L644.7,897.4 L645.7,897.2 L646.7,896.9 L647.6,896.7 L648.6,896.4 L649.5,896.1 L650.4,895.9 L651.3,895.6 L652.2,895.3 L653.1,895.0 L653.9,894.8 L654.8,894.5 L655.6,894.2 L656.4,893.9 L657.3,893.6 L658.1,893.4 L658.8,893.1 L659.6,892.8 L660.4,892.5 L661.1,892.2 L661.9,891.9 L662.6,891.6 L663.3,891.3 L664.1,891.0 L664.8,890.7 L665.5,890.4 L666.2,890.1 L666.8,889.7 L667.5,889.4 L668.2,889.1 L668.8,888.8 L669.5,888.4 L670.1,888.1 L670.7,887.7 L671.4,887.4 L672.0,887.0 L672.6,886.6 L673.2,886.2 L673.8,885.9 L674.3,885.5 L674.9,885.0 L675.5,884.6 L676.0,884.2 L676.6,883.8 L677.1,883.3 L677.6,882.8 L678.1,882.4 L678.6,881.9 L679.1,881.4 L679.6,880.8 L680.1,880.3 L680.6,879.8 L681.0,879.2 L681.4,878.6 L681.9,878.0 L682.3,877.4 L682.7,876.8 L683.0,876.1 L683.4,875.5 L683.8,874.8 L684.1,874.1 L684.5,873.4 L684.8,872.6 L685.1,871.9 L685.4,871.1 L685.6,870.3 L685.9,869.5 L686.2,868.6 L686.4,867.7 L686.6,866.8 L686.8,865.9 L687.0,865.0 L687.2,864.0 L687.4,863.0 L687.6,861.9 L687.7,860.8 L687.9,859.7 L688.0,858.5 L688.1,857.3 L688.3,856.0 L688.4,854.6 L688.5,853.2 L688.5,851.6 L688.6,850.0 L688.7,848.2 L688.7,846.2 L688.8,843.9 L688.8,841.3 L688.8,837.8 L688.8,830.0 L688.8,825.0 L688.8,802.9 L688.8,780.9 L688.8,758.8 L688.8,736.7 L688.8,714.7 L688.8,692.6 L688.8,670.5 L688.8,648.4 L688.8,626.4 L688.8,604.3 L688.8,582.2 L688.8,560.2 L688.8,538.1 L688.8,516.0 L688.8,494.0 L688.8,471.9 L688.8,449.8 L688.8,427.8 L688.8,405.7 L688.8,383.6 L688.8,361.6 L688.8,339.5 L688.8,317.4 L688.8,295.3 L688.8,273.3 L688.8,251.2 L688.8,229.1 L688.8,207.1 L688.8,185.0 L688.8,180.0 L688.8,173.4 L688.8,170.2 L688.7,167.6 L688.7,165.4 L688.7,163.5 L688.6,161.7 L688.5,160.0 L688.4,158.5 L688.3,157.0 L688.2,155.6 L688.1,154.3 L688.0,153.0 L687.8,151.8 L687.7,150.6 L687.5,149.5 L687.3,148.4 L687.1,147.3 L686.9,146.3 L686.7,145.3 L686.5,144.3 L686.2,143.3 L686.0,142.4 L685.7,141.5 L685.4,140.6 L685.1,139.8 L684.8,138.9 L684.5,138.1 L684.2,137.3 L683.8,136.5 L683.5,135.7 L683.1,135.0 L682.7,134.2 L682.3,133.5 L681.9,132.8 L681.5,132.1 L681.0,131.5 L680.6,130.8 L680.1,130.2 L679.6,129.5 L679.1,128.9 L678.6,128.3 L678.1,127.7 L677.6,127.2 L677.1,126.6 L676.5,126.0 L676.0,125.5 L675.4,125.0 L674.8,124.4 L674.2,123.9 L673.6,123.4 L673.0,122.9 L672.4,122.5 L671.8,122.0 L671.1,121.5 L670.5,121.1 L669.8,120.6 L669.1,120.2 L668.5,119.7 L667.8,119.3 L667.1,118.9 L666.4,118.5 L665.6,118.1 L664.9,117.6 L664.2,117.2 L663.4,116.8 L662.7,116.5 L661.9,116.1 L661.1,115.7 L660.3,115.3 L659.5,114.9 L658.7,114.5 L657.8,114.2 L657.0,113.8 L656.1,113.5 L655.3,113.1 L654.4,112.7 L653.5,112.4 L652.6,112.0 L651.7,111.7 L650.7,111.3 L649.8,111.0 L648.8,110.7 L647.9,110.3 L646.9,110.0 L645.9,109.7 L644.8,109.4 L643.8,109.0 L642.8,108.7 L641.7,108.4 L640.6,108.1 L639.6,107.8 L638.4,107.5 L637.3,107.2 L636.2,106.9 L635.0,106.6 L633.9,106.3 L632.7,106.0 L631.5,105.8 L630.3,105.5 L629.0,105.2 L627.8,104.9 L626.5,104.7 L625.2,104.4 L623.9,104.1 L622.6,103.9 L621.2,103.6 L619.9,103.4 L618.5,103.2 L617.1,102.9 L615.7,102.7 L614.2,102.5 L612.8,102.2 L611.3,102.0 L609.8,101.8 L608.3,101.6 L606.7,101.4 L605.1,101.2 L603.6,101.0 L601.9,100.8 L600.3,100.6 L598.6,100.4 L596.9,100.2 L595.2,100.0 L593.5,99.9 L591.7,99.7 L589.9,99.5 L588.0,99.4 L586.2,99.2 L584.3,99.1 L582.3,98.9 L580.4,98.8 L578.4,98.6 L576.3,98.5 L574.2,98.4 L572.1,98.3 L569.9,98.1 L567.7,98.0 L565.4,97.9 L563.1,97.8 L560.8,97.7 L558.3,97.6 L555.8,97.5 L553.3,97.5 L550.6,97.4 L547.9,97.3 L545.1,97.2 L542.2,97.2 L539.1,97.1 L536.0,97.1 L532.7,97.0 L529.2,97.0 L525.6,96.9 L521.7,96.9 L517.5,96.9 L512.9,96.8 L507.8,96.8 L501.9,96.8 L494.5,96.8 L479.2,96.8Z" fill="none" stroke="url(#glassg)" stroke-width="1.3" transform="translate(0,0.3)"/>
<g clip-path="url(#bodyclip)">
 <rect x="231" y="79" width="580" height="868" fill="#232323"/>
 <rect x="269.5" y="79" width="17" height="868" fill="url(#lband)"/>
 <rect x="269.5" y="79" width="17" height="868" fill="url(#lbandv)"/>
 <rect x="269.5" y="79" width="17" height="868" fill="url(#lbandtop)"/>
 <path d="M231,79 L523.6,79 L145.7,915 L231,915Z" fill="url(#glare)"/>
 <path d="M432,97 L527,97 L521,108.5 L440,108.5Z" fill="#2e2e2e" stroke="#7a7a7a" stroke-width="0.9"/><path d="M437,101 L522,101 M439,104 L520,104" stroke="#3a3a3a" stroke-width="1" stroke-dasharray="1 1"/>
 <circle cx="314.2" cy="128.2" r="5.5" fill="#fff" opacity="0.035"/><circle cx="329.4" cy="128.2" r="5.5" fill="#fff" opacity="0.035"/>
 <circle cx="632.1" cy="127.8" r="8.5" fill="#262626"/><circle cx="632.1" cy="127.8" r="1.6" fill="#2b2f6a"/>
</g>
<!-- screen -->
<rect x="287" y="181" width="385" height="25" fill="#000"/>
<path d="M287,181 L478,181 L466.5,206 L287,206Z" fill="url(#sbg)"/>
<rect x="287" y="206" width="385" height="48" fill="#2e2e2e"/>
<path d="M287,206 L466.5,206 L444.5,254 L287,254Z" fill="url(#abg)"/>
<rect x="287" y="253" width="385" height="1" fill="#222"/>
<path d="M633,187.5 Q643,177.5 653,187.5 L643,198.5Z" fill="#fff"/>
<path d="M636,190.5 Q643,183.5 650,190.5 M638.5,193.3 Q643,189 647.5,193.3" fill="none" stroke="#000" stroke-width="0.9" opacity="0.55"/>
<path d="M656,184.2 L659.5,184.2 L659.5,182.5 L664,182.5 L664,184.2 L667.4,184.2 L667.4,199.5 L656,199.5Z" fill="#fff"/>
<g>
 <path d="M305.4,217.1 L308,221.6 M324.4,217.1 L321.8,221.6" stroke="#a4c96e" stroke-width="1.1"/>
 <path d="M302,232 A13,12.7 0 0 1 328,232 L328,241.4 Q328,243.4 326,243.4 L304,243.4 Q302,243.4 302,241.4Z" fill="#a4c96e"/>
 <path d="M302,232.2 L328,232.2" stroke="#94ba60" stroke-width="0.7"/>
 <path d="M302,232.5 L315,243.4 L304,243.4 Q302,243.4 302,241.4Z" fill="#9cc266" opacity="0.6"/>
 <circle cx="309.2" cy="227" r="1.5" fill="#fff"/><circle cx="320.6" cy="227" r="1.5" fill="#fff"/>
</g>
<text x="335.2" y="236.3" font-family="Liberation Sans" font-size="18.7" fill="#fff" letter-spacing="-0.7">MyRent</text>
<rect x="287" y="254" width="385" height="523" fill="#fff"/>
<rect x="287" y="254" width="385" height="3" fill="#f4f4f4" opacity="0.6"/>
<text x="294.5" y="275" font-family="Liberation Sans" font-weight="bold" font-size="14" fill="#383838" letter-spacing="-0.65">LOCATION</text>
<rect x="287" y="285" width="385" height="2" fill="#d8d8d8"/>
<text x="299" y="311" font-family="Liberation Sans" font-size="18" fill="#8d8d8d" letter-spacing="-0.2">52.253456,-7.187162</text>
<rect x="298" y="294" width="1" height="21" fill="#666"/>
<rect x="290" y="318.6" width="378" height="1.6" fill="#33b5e5"/>
<rect x="290" y="316" width="1.4" height="4" fill="#33b5e5"/><rect x="666.6" y="316" width="1.4" height="4" fill="#33b5e5"/>
<text x="294.5" y="343.5" font-family="Liberation Sans" font-weight="bold" font-size="14" fill="#383838" letter-spacing="0.2">STATUS</text>
<rect x="287" y="355" width="385" height="2" fill="#d8d8d8"/>
<rect x="306" y="360" width="347" height="40" rx="1" fill="#dcdcdc"/>
<rect x="306" y="398.5" width="347" height="1.5" fill="#bcbcbc"/>
<rect x="294.5" y="412.5" width="15.5" height="15.5" rx="1" fill="#fff" stroke="#cfcfcf" stroke-width="1"/>
<text x="319" y="426" font-family="Liberation Sans" font-size="16" fill="#111" letter-spacing="-0.4">Rented?</text>
<rect x="306" y="441" width="347" height="40.5" rx="1" fill="#dcdcdc"/>
<rect x="306" y="479.8" width="347" height="1.4" fill="#bcbcbc"/>
<text x="479.5" y="467" text-anchor="middle" font-family="Liberation Sans" font-size="18" fill="#111" letter-spacing="0.2">Prospective Tenant</text>
<rect x="306" y="489.5" width="347" height="40" rx="1" fill="#dcdcdc"/>
<rect x="306" y="527.7" width="347" height="1.5" fill="#bcbcbc"/>
<text x="479.5" y="514" text-anchor="middle" font-family="Liberation Sans" font-size="18" fill="#111" letter-spacing="0.12">Send Residence Information</text>
<rect x="287" y="777" width="385" height="48" fill="#000"/>
<g fill="none" stroke="#fff" stroke-width="1.8">
 <path d="M389,795 L383.5,800.6 L389,806.3 M383.5,800.6 L409,800.6 A4.9,4.9 0 0 1 409,810.4 L397.2,810.4"/>
 <path d="M462.3,810.5 L462.3,798.5 L479.4,793.2 L496.5,798.5 L496.5,810.5Z"/>
 <path d="M545.2,800.8 L571.2,800.8 L571.2,810.5 L545.2,810.5Z M552,795.5 L577,795.5 L577,806.5"/>
</g>
</svg></div>
<div id="div2"></div>
<div id="ct"></div>
<div id="cthead"><span>Component Tree</span></div>
<div class="tr" style="top:30px">
 <svg style="position:absolute;left:3px;top:4px" width="10" height="9" viewBox="0 0 10 9"><path d="M0.5,0.8 L9.5,0.8 L5,8.3Z" fill="#8c8c8c"/></svg>
 <svg style="position:absolute;left:25px;top:2px" width="11" height="16" viewBox="0 0 11 16"><rect x="0.3" y="0.5" width="10.2" height="15" rx="1.5" fill="#9a9a9a"/><rect x="1.6" y="2" width="7.6" height="10.5" fill="#fff"/><rect x="2.2" y="2.6" width="6.4" height="9.2" fill="#84b3d6"/><rect x="4.3" y="13.2" width="2.2" height="1" fill="#111"/></svg>
 <span style="left:40px">Device Screen</span>
</div>
<div class="tr" style="top:49px;background:#116cd6;color:#fff">
 <svg style="position:absolute;left:23px;top:5px" width="10" height="9" viewBox="0 0 10 9"><path d="M0.5,0.8 L9.5,0.8 L5,8.3Z" fill="#fff"/></svg>
 <svg style="position:absolute;left:42px;top:1px" width="16" height="17" viewBox="0 0 16 17"><rect x="0.5" y="0.5" width="15" height="16" fill="#fff" stroke="#bbb"/><path d="M5.5,1 v15 M10.5,1 v15" stroke="#bbb"/></svg>
 <span style="left:60px">LinearLayout (vertical)</span>
</div>
<div class="tr" style="top:68px">
 <svg style="position:absolute;left:62px;top:1px" width="16" height="16" viewBox="0 0 16 16"><rect x="0.5" y="1.5" width="15" height="12.8" rx="2" fill="#fff" stroke="#8f8f8f"/><path d="M2.9,12.2 V8.6 L3.9,7 H5.9 L6.9,8.6 V12.2 M2.9,10.2 H6.9 M4.4,5.2 H5.4 V6.2" fill="none" stroke="#333" stroke-width="1.05"/><path d="M9.6,4.3 V11.7 H13.4 V7.6 H9.6" fill="none" stroke="#333" stroke-width="1.05"/></svg>
 <span style="left:80px">TextView <span class="g" style="position:static">– @string/location</span></span>
</div>
<div class="tr" style="top:87px">
 <svg style="position:absolute;left:44px;top:5px" width="8" height="10" viewBox="0 0 8 10"><path d="M0.5,0.5 L7.5,5 L0.5,9.5Z" fill="#8c8c8c"/></svg>
 <svg style="position:absolute;left:62px;top:1px" width="16" height="17" viewBox="0 0 16 17"><rect x="0.5" y="0.5" width="15" height="16" fill="#fff" stroke="#8c8c8c"/><path d="M5.5,1 v15 M10.5,1 v15" stroke="#c8c8c8"/></svg>
 <span style="left:80px">LinearLayout <span class="g" style="position:static">(horizontal)</span></span>
</div>
<div class="tr" style="top:106px">
 <svg style="position:absolute;left:62px;top:1px" width="16" height="16" viewBox="0 0 16 16"><rect x="0.5" y="1.5" width="15" height="12.8" rx="2" fill="#fff" stroke="#8f8f8f"/><path d="M2.9,12.2 V8.6 L3.9,7 H5.9 L6.9,8.6 V12.2 M2.9,10.2 H6.9 M4.4,5.2 H5.4 V6.2" fill="none" stroke="#333" stroke-width="1.05"/><path d="M9.6,4.3 V11.7 H13.4 V7.6 H9.6" fill="none" stroke="#333" stroke-width="1.05"/></svg>
 <span style="left:80px">TextView <span class="g" style="position:static">– @string/status</span></span>
</div>
<div class="tr" style="top:125px">
 <svg style="position:absolute;left:62px;top:1px" width="16" height="16" viewBox="0 0 16 16"><rect x="0.5" y="0.5" width="15" height="15" rx="1.5" fill="#ededed" stroke="#cfcfcf"/><ellipse cx="4.9" cy="7.8" rx="2.1" ry="3.1" fill="none" stroke="#94b83c" stroke-width="1.1"/><path d="M8.6,4.6 V11 M12.6,4.6 L9,8.2 L12.8,11" fill="none" stroke="#94b83c" stroke-width="1.1"/></svg>
 <span style="left:80px"><b>registration_date</b> (Button)</span>
</div>
<div class="tr" style="top:144px">
 <svg style="position:absolute;left:62px;top:1px" width="16" height="16" viewBox="0 0 16 16"><rect x="0.5" y="0.5" width="15" height="15" rx="1.5" fill="#f0f0f0" stroke="#8c8c8c"/><path d="M3,8.2l3,3.2L13.2,3.8" fill="none" stroke="#6fb52c" stroke-width="2.2"/></svg>
 <span style="left:80px"><b>isrented</b> (CheckBox) <span class="g" style="position:static">– @string/isrented</span></span>
</div>
<div class="tr" style="top:163px">
 <svg style="position:absolute;left:62px;top:1px" width="16" height="16" viewBox="0 0 16 16"><rect x="0.5" y="0.5" width="15" height="15" rx="1.5" fill="#ededed" stroke="#cfcfcf"/><ellipse cx="4.9" cy="7.8" rx="2.1" ry="3.1" fill="none" stroke="#94b83c" stroke-width="1.1"/><path d="M8.6,4.6 V11 M12.6,4.6 L9,8.2 L12.8,11" fill="none" stroke="#94b83c" stroke-width="1.1"/></svg>
 <span style="left:80px"><b>tenant</b> (Button) <span class="g" style="position:static">– @string/landlord</span></span>
</div>
<div class="tr" style="top:182px">
 <svg style="position:absolute;left:62px;top:1px" width="16" height="16" viewBox="0 0 16 16"><rect x="0.5" y="0.5" width="15" height="15" rx="1.5" fill="#ededed" stroke="#cfcfcf"/><ellipse cx="4.9" cy="7.8" rx="2.1" ry="3.1" fill="none" stroke="#94b83c" stroke-width="1.1"/><path d="M8.6,4.6 V11 M12.6,4.6 L9,8.2 L12.8,11" fill="none" stroke="#94b83c" stroke-width="1.1"/></svg>
 <span style="left:80px"><b>residence_reportButton</b> (Button) <span class="g" style="position:static">– @string/residence_report</span></span>
</div>


<div id="prophead"><span>Properties</span></div>
<div id="props"></div>
<div class="pr" style="top:445px;background:#dcdcdc;color:#fafafa"><span class="k b">layout:width</span><div class="sep" style="background:#f0f0f0"></div><span class="v">match_parent</span></div>
<div class="pr" style="top:467px"><span class="k b blue">layout:height</span><div class="sep"></div><span class="v">match_parent</span></div>
<div class="pr" style="top:489px"><span class="k b">style</span><div class="sep"></div></div>
<div class="pr" style="top:511px"><span class="k b blue">orientation</span><div class="sep"></div><span class="v">vertical</span></div>
<div class="pr" style="top:533px"><div class="exp"></div><span class="k b">gravity</span><div class="sep"></div><span class="v">[]</span></div>
<div class="pr" style="top:555px"><span class="k">accessibilityLiveRegion</span><div class="sep"></div></div>
<div class="pr" style="top:577px"><span class="k">alpha</span><div class="sep"></div></div>
<div class="pr" style="top:599px"><span class="k">background</span><div class="sep"></div></div>
<div class="pr" style="top:621px"><span class="k b">baselineAligned</span><div class="sep"></div><div class="cb"></div></div>
<div class="pr" style="top:643px"><span class="k">baselineAlignedChildIndex</span><div class="sep"></div></div>
<div class="pr" style="top:665px"><span class="k">clickable</span><div class="sep"></div><div class="cb"></div></div>
<div class="pr" style="top:687px"><span class="k">contentDescription</span><div class="sep"></div></div>
<div class="pr" style="top:709px"><span class="k">divider</span><div class="sep"></div></div>
<div class="pr" style="top:731px"><span class="k">dividerPadding</span><div class="sep"></div></div>
<div class="pr" style="top:753px"><span class="k">drawingCacheQuality</span><div class="sep"></div></div>
<div class="pr" style="top:775px"><span class="k">duplicateParentState</span><div class="sep"></div><div class="cb"></div></div>
<div class="pr" style="top:797px"><span class="k">fadeScrollbars</span><div class="sep"></div><div class="cb"></div></div>
<div class="pr" style="top:819px"><div class="exp"></div><span class="k">fadingEdge</span><div class="sep"></div><span class="v">[]</span></div>
<div class="pr" style="top:841px"><span class="k">fadingEdgeLength</span><div class="sep"></div></div>
<div class="pr" style="top:863px"><span class="k">filterTouchesWhenObscured</span><div class="sep"></div><div class="cb"></div></div>
<div class="pr" style="top:885px"><span class="k">fitsSystemWindows</span><div class="sep"></div><div class="cb"></div></div>
<div class="pr" style="top:907px"><span class="k">focusable</span><div class="sep"></div><div class="cb"></div></div>
<div class="pr" style="top:929px"><span class="k">focusableInTouchMode</span><div class="sep"></div><div class="cb"></div></div>
<div style="position:absolute;left:0;top:947px;width:1242px;height:1px;background:#fbfbfb"></div><div id="rborder"></div><div id="rside"></div><div style="position:absolute;left:1242px;top:346px;width:5px;height:27px;background:#f6f6f6;border:1px solid #cfcfcf;border-right:0;border-radius:5px 0 0 5px"></div><div style="position:absolute;left:1246px;top:61px;width:1px;height:3px;background:#e8b66f"></div><div style="position:absolute;left:1246px;top:112px;width:1px;height:8px;background:#9fc56a"></div><div style="position:absolute;left:1245px;top:0;width:2px;height:2px;background:#4f8fb8"></div>
<svg style="position:absolute;left:150px;top:5px" width="65" height="25" viewBox="150 5 65 25">
<g transform="translate(173.9,15.8)"><circle r="4" fill="#7a7a7a"/><g stroke="#7a7a7a" stroke-width="2.2"><path d="M0,-5.8 V5.8 M-5.8,0 H5.8 M-4.1,-4.1 L4.1,4.1 M4.1,-4.1 L-4.1,4.1"/></g><circle r="1.5" fill="#ebebeb"/></g>
<path d="M182.3,15.2 L187,15.2 L184.65,18Z" fill="#7a7a7a"/>
<rect x="195.6" y="11.6" width="2.6" height="10" fill="none" stroke="#7a7a7a" stroke-width="1.2"/><rect x="195" y="11" width="3.8" height="5" fill="#7a7a7a"/>
<path d="M200,14.3 h7 M202.2,12.2 L200,14.3 L202.2,16.4" fill="none" stroke="#7a7a7a" stroke-width="1.3"/>
</svg>
<svg style="position:absolute;left:1140px;top:5px" width="102" height="25" viewBox="1140 5 102 25">
<path d="M1148,10.8 h12 M1148,23.2 h12" stroke="#8c8c8c" stroke-width="1.6"/>
<path d="M1150.3,15.9 L1154,12.4 L1157.7,15.9Z M1150.3,18.2 L1154,21.7 L1157.7,18.2Z" fill="#5aaad5"/>
<path d="M1169,15.3 h12 M1169,18.9 h12" stroke="#8c8c8c" stroke-width="1.6"/>
<path d="M1171.5,10 L1175,14 L1178.5,10Z M1171.5,24.2 L1175,20.2 L1178.5,24.2Z" fill="#5aaad5"/>
<rect x="1188.3" y="10" width="0.8" height="15" fill="#c4c4c4"/>
<g transform="translate(1202,16.7)"><circle r="4" fill="#7a7a7a"/><g stroke="#7a7a7a" stroke-width="2.2"><path d="M0,-5.8 V5.8 M-5.8,0 H5.8 M-4.1,-4.1 L4.1,4.1 M4.1,-4.1 L-4.1,4.1"/></g><circle r="1.5" fill="#ebebeb"/></g>
<path d="M1210.2,16 L1215,16 L1212.6,18.8Z" fill="#7a7a7a"/>
<path d="M1223,15.5 h7 M1228,13.4 L1230.2,15.5 L1228,17.6" fill="none" stroke="#7a7a7a" stroke-width="1.3"/>
<rect x="1232.6" y="12.6" width="2.6" height="10" fill="none" stroke="#7a7a7a" stroke-width="1.2"/><rect x="1232" y="12" width="3.8" height="5" fill="#7a7a7a"/>
</svg>
<svg style="position:absolute;left:1150px;top:413px" width="90" height="32" viewBox="1150 413 90 32">
<path d="M1158.6,426 Q1158.6,423.2 1162.3,423.2 Q1166.2,423.2 1166.2,426.2 Q1166.2,428.3 1164,429.3 Q1162.3,430.2 1162.3,432.2" fill="none" stroke="#5aa6cf" stroke-width="2.4"/>
<circle cx="1162.3" cy="435.6" r="1.4" fill="#5aa6cf"/>
<path d="M1190.3,426.8 L1194.2,426.8 Q1198,426.8 1198,430.7 Q1198,435.6 1194.2,435.6 L1186.2,435.6" fill="none" stroke="#a884c4" stroke-width="2.3"/>
<path d="M1185,427 L1190.5,423.3 L1190.5,430.7Z" fill="#a884c4"/>
<path d="M1214.8,424 L1229.3,424 L1229.3,425.5 L1224.3,430.3 L1224.3,434.7 L1220.5,437 L1220.5,430.3 L1214.8,425.5Z" fill="#5aaad5"/>
</svg>


</body></html>
